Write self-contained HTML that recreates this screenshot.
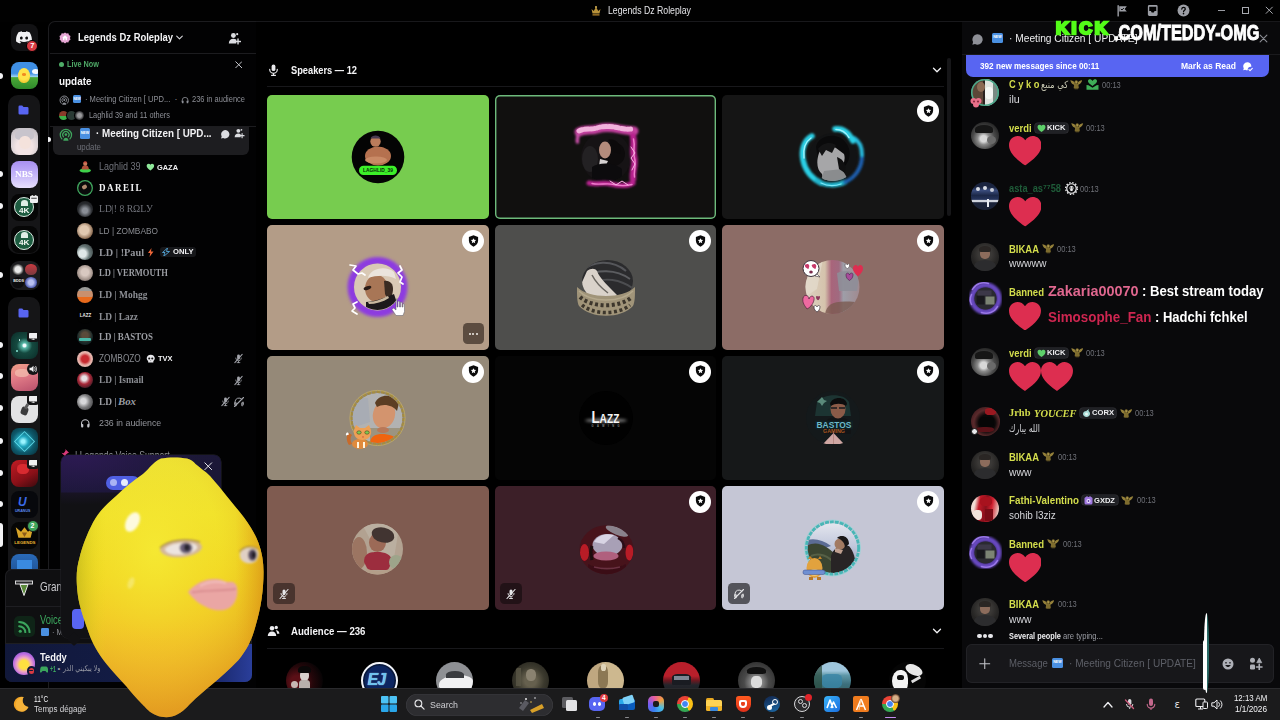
<!DOCTYPE html>
<html lang="en">
<head>
<meta charset="utf-8">
<title>Legends Dz Roleplay</title>
<style>
*{box-sizing:border-box;margin:0;padding:0}
html,body{width:1280px;height:720px;overflow:hidden;background:#000}
body{font-family:"Liberation Sans","DejaVu Sans",sans-serif;color:#fff;position:relative;font-size:11px}
.a{position:absolute}
.t{position:absolute;white-space:nowrap;line-height:1}
.b{font-weight:bold}
.c{border-radius:50%}
/* ---- title bar ---- */
#title{left:0;top:0;width:1280px;height:22px;background:#010101}
/* ---- stage ---- */
#stage{left:256px;top:22px;width:706px;height:666px;background:#000}
.tile{position:absolute;width:221.700px;height:124.200px;border-radius:5px;overflow:hidden}
.avs{position:absolute;left:75px;top:26px;overflow:visible}
.mod{position:absolute;right:5px;top:5px;width:22px;height:22px;border-radius:50%;background:#fff}
.mod svg{position:absolute;left:5.200px;top:3.800px}
.mute{position:absolute;left:5.5px;bottom:5.5px;width:22px;height:21px;border-radius:4.5px;background:rgba(0,0,0,.42)}
.mute svg{position:absolute;left:5px;top:4.5px}
/* ---- chat ---- */
#chat{left:962px;top:22px;width:318px;height:666px;background:#09090b}
.nm{color:#d5dd47;font-weight:bold;font-size:11px}
.ts{color:#7d7f86;font-size:8.5px}
.msg{color:#d6d7da;font-size:11px}
.cav{position:absolute;left:972px;width:27px;height:27px;border-radius:50%;overflow:hidden}
.tag{position:absolute;height:11px;border-radius:3px;background:#26272b;color:#e4e4e6;font-size:7.5px;font-weight:bold;line-height:11px;padding-left:10px;padding-right:3px;white-space:nowrap}
/* ---- taskbar ---- */
#task{left:0;top:688px;width:1280px;height:32px;background:#1b1b1c}
</style>
</head>
<body>


<svg width="0" height="0" style="position:absolute">
<defs>
<symbol id="shield" viewBox="0 0 24 24"><path d="M12 1.5l8.5 3.2v6.6c0 5-3.4 9.300-8.5 11.200C6.900 20.600 3.500 16.300 3.500 11.300V4.700z" fill="#0b0b0c"/><path d="M12 6.800l1.500 3.100 3.400.4-2.500 2.300.7 3.400-3.100-1.700-3.100 1.700.7-3.400-2.500-2.300 3.400-.4z" fill="#fff"/></symbol>
<symbol id="micoff" viewBox="0 0 24 24"><path d="M12 3a3 3 0 0 0-3 3v5a3 3 0 0 0 4.800 2.400L15 12V6a3 3 0 0 0-3-3z" fill="#e6e6e8"/><path d="M6 11a6 6 0 0 0 9.500 4.900M18 11a6 6 0 0 1-.6 2.600M12 17.500V21M9 21h6" stroke="#e6e6e8" stroke-width="1.800" fill="none" stroke-linecap="round"/><path d="M20 3L4 21" stroke="#e6e6e8" stroke-width="2.200" stroke-linecap="round"/></symbol>
<symbol id="deaf" viewBox="0 0 24 24"><path d="M4 17v-5a8 8 0 0 1 14-5.300M20 12v5M4 13.500h2.500v6H5a1 1 0 0 1-1-1zM20 13.500h-2.500v6H19a1 1 0 0 0 1-1z" stroke="#e6e6e8" stroke-width="1.900" fill="none" stroke-linecap="round" stroke-linejoin="round"/><path d="M21 3L3 21" stroke="#e6e6e8" stroke-width="2.200" stroke-linecap="round"/></symbol>
<symbol id="heart" viewBox="1.200 3 33.600 30.500" preserveAspectRatio="none"><path d="M18 33.500C6.500 25.500 1.200 19.300 1.200 12.300 1.200 6.900 5.300 3 10.200 3c3.200 0 6.100 1.700 7.800 4.500C19.700 4.700 22.600 3 25.800 3c4.900 0 9 3.900 9 9.300 0 7-5.300 13.200-16.800 21.200z" fill="#dd2e50"/></symbol>
<symbol id="chev" viewBox="0 0 24 24"><path d="M5 8.500l7 7 7-7" stroke="#f2f2f4" stroke-width="2.600" fill="none" stroke-linecap="round" stroke-linejoin="round"/></symbol>
<symbol id="wing" viewBox="0 0 24 20"><path d="M12 2.500c2 0 3.200 1.500 3.200 3.300 0 1.300-.6 2.400-1.500 3l2.300 1.200 1 7.500h-10l1-7.500 2.300-1.200c-.9-.6-1.500-1.700-1.500-3C8.800 4 10 2.500 12 2.500z" fill="#7e6c2e"/><path d="M.5 2.500c3.500 0 7 1.800 9 5-.8 1-.8 2.500 0 3.800C5.500 11.500 2 8.500.5 2.500zM23.500 2.500c-3.500 0-7 1.800-9 5 .8 1 .8 2.500 0 3.800 4-.3 7.500-3.300 9-8.800z" fill="#94803a"/><path d="M8 17.500h8l-1 2.500H9z" fill="#6e5e28"/><circle cx="12" cy="5.800" r="1.600" fill="#b8a458"/></symbol>
</defs>
</svg>

<!-- ================= TITLE BAR ================= -->
<div id="title" class="a"></div>
<svg class="a" style="left:590px;top:4.500px" width="12" height="12" viewBox="0 0 24 24"><path d="M3 8l4.500 4L12 4l4.500 8L21 8l-2 9H5z" fill="#b8923a"/><rect x="5" y="18.500" width="14" height="2.500" fill="#b8862c"/><circle cx="12" cy="4" r="1.800" fill="#f0c860"/></svg>
<div class="t" style="left:608.00px;top:5.10px;font-size:10.60px;color:#e4e4e7;transform:scaleX(0.824);transform-origin:0 50%;">Legends Dz Roleplay</div>
<svg class="a" style="left:1116px;top:4px" width="13" height="13" viewBox="0 0 24 24"><path d="M4 3v19" stroke="#9c9ea5" stroke-width="2.600" stroke-linecap="round"/><path d="M6 4h14l-4 5 4 5H6z" fill="#9c9ea5"/><path d="M9 9l2 2 3.500-3.500" stroke="#010101" stroke-width="1.800" fill="none"/></svg>
<svg class="a" style="left:1145.500px;top:4px" width="13.500" height="13" viewBox="0 0 24 24"><path d="M3 4.500A2.500 2.500 0 0 1 5.500 2h13A2.500 2.500 0 0 1 21 4.500v15a2.500 2.500 0 0 1-2.500 2.500h-13A2.500 2.500 0 0 1 3 19.500zM5.500 5v8h3.200l1.300 2.500h4l1.300-2.500h3.200V5z" fill="#9c9ea5" fill-rule="evenodd"/></svg>
<svg class="a" style="left:1177px;top:4px" width="13" height="13" viewBox="0 0 24 24"><circle cx="12" cy="12" r="11" fill="#9c9ea5"/><path d="M8.800 9.300c.2-2 1.600-3 3.300-3 1.800 0 3.200 1.100 3.200 2.800 0 2.400-3.200 2.600-3.200 5" stroke="#010101" stroke-width="2.300" fill="none" stroke-linecap="round"/><circle cx="12" cy="17.800" r="1.500" fill="#010101"/></svg>
<div class="a" style="left:1217.50px;top:10.30px;width:7.00px;height:1.00px;background:#9a9ca2;"></div>
<div class="a" style="left:1241.50px;top:6.50px;width:7.50px;height:7.50px;background:transparent;border:1px solid #a8aab0;"></div>
<svg class="a" style="left:1265px;top:6px" width="8.500" height="8.500" viewBox="0 0 10 10"><path d="M1 1l8 8M9 1l-8 8" stroke="#b0b2b8" stroke-width="1.100"/></svg>

<!-- ================= SERVER RAIL ================= -->
<div id="rail" class="a" style="left:0;top:22px;width:49px;height:666px;background:#000"></div>
<div class="a" style="left:10.5px;top:24.0px;width:27.0px;height:27.0px;border-radius:8.0px;background:#121214;overflow:hidden;"><svg class="a" style="left:5.500px;top:7px" width="16" height="12.500" viewBox="0 0 24 18"><path d="M20.300 1.500A19 19 0 0 0 15.400 0l-.6 1.300a17.500 17.500 0 0 0-5.600 0L8.600 0a19 19 0 0 0-4.900 1.500C.6 6.200-.3 10.800.2 15.300a19.500 19.500 0 0 0 6 3l1.300-2.100-2-1 .5-.4a13.800 13.800 0 0 0 12 0l.5.400-2 1 1.300 2.100a19.500 19.500 0 0 0 6-3c.5-5.200-.9-9.800-3.500-13.800zM8 12.500c-1.200 0-2.100-1.100-2.100-2.400S6.800 7.700 8 7.700s2.200 1.100 2.100 2.400c0 1.300-.9 2.400-2.100 2.400zm8 0c-1.200 0-2.100-1.100-2.100-2.400s.9-2.400 2.100-2.400 2.200 1.100 2.100 2.400c0 1.300-.9 2.400-2.100 2.400z" fill="#f2f2f4"/></svg></div>
<div class="a c" style="left:26.200px;top:39.600px;width:12px;height:12px;background:#d83a42;border:1.500px solid #000"></div>
<div class="t" style="left:30.30px;top:41.95px;font-size:7.50px;color:#fff;font-weight:bold;">7</div>
<div class="a" style="left:10.5px;top:62.3px;width:27.0px;height:27.0px;border-radius:8.0px;background:linear-gradient(180deg,#3f8fe4 0 42%,#9ad0f0 54%,#4aa838 58%,#2f8a2a 100%);overflow:hidden;"><i class="a" style="left:7.500px;top:5.500px;width:12px;height:15px;border-radius:50% 50% 45% 45%;background:radial-gradient(circle at 50% 40%,#ffe34a 0 50%,#e8b820 100%)"></i><i class="a" style="left:11.500px;top:11px;width:4px;height:2.500px;border-radius:50%;background:#f08a20"></i><i class="a c" style="left:21px;top:7px;width:7px;height:5px;background:#f4f8fc"></i></div>
<div class="a" style="left:0.00px;top:72.50px;width:2.60px;height:6.00px;background:#f2f2f4;border-radius:0 3px 3px 0;"></div>
<div class="a" style="left:8.30px;top:94.50px;width:31.50px;height:159.50px;background:#151517;border-radius:10.0px;"></div>
<svg class="a" style="left:18.300px;top:104.7px" width="11" height="10" viewBox="0 0 22 20"><path d="M1 3.500A2.500 2.500 0 0 1 3.500 1h5l2.500 3h7.500A2.500 2.500 0 0 1 21 6.500v10a2.500 2.500 0 0 1-2.500 2.500h-15A2.500 2.500 0 0 1 1 16.500z" fill="#5865f2"/></svg>
<div class="a" style="left:10.5px;top:128.2px;width:27.0px;height:27.0px;border-radius:8.0px;background:radial-gradient(circle at 50% 70%,#f2e4e4 0 35%,#d8d0d4 60%,#b8b4bc 100%);overflow:hidden;"><i class="a" style="left:4px;top:1px;width:19px;height:11px;border-radius:50% 50% 30% 30%;background:#c8c4cc"></i><i class="a" style="left:8px;top:8px;width:12px;height:13px;border-radius:45%;background:#f4e2dc"></i></div>
<div class="a" style="left:10.5px;top:160.6px;width:27.0px;height:27.0px;border-radius:8.0px;background:linear-gradient(180deg,#a890f0 0,#c0b0f8 45%,#e8e0fc 100%);overflow:hidden;"><div class="t" style="left:4.20px;top:9.25px;font-size:8.50px;color:#fff;font-weight:bold;font-family:'Liberation Serif','DejaVu Serif',serif;transform:scaleX(1.089);transform-origin:0 50%;">NBS</div></div>
<div class="a" style="left:0.00px;top:170.70px;width:2.60px;height:6.00px;background:#f2f2f4;border-radius:0 3px 3px 0;"></div>
<div class="a" style="left:10.5px;top:193.7px;width:27.0px;height:27.0px;border-radius:8.0px;background:#060606;overflow:hidden;"><i class="a c" style="left:3.500px;top:3.500px;width:20px;height:20px;background:#1d5c40;border:1px solid #d8e8e0"></i><div class="t" style="left:8.30px;top:13.20px;font-size:7.00px;color:#f4f8f4;font-weight:bold;transform:scaleX(1.173);transform-origin:0 50%;">4K</div><i class="a" style="left:10px;top:6px;width:7px;height:6px;border-radius:50% 50% 0 0;background:#dfeee6"></i></div>
<svg class="a" style="left:30px;top:194.500px" width="8" height="8" viewBox="0 0 16 16"><rect x="0" y="1.500" width="16" height="14.500" rx="2.500" fill="#f0f0f2"/><path d="M2.500 6.500h11" stroke="#151517" stroke-width="1.600"/><path d="M4.500 0v3.500M11.500 0v3.500" stroke="#f0f0f2" stroke-width="2"/></svg>
<div class="a" style="left:0.00px;top:202.80px;width:2.60px;height:6.00px;background:#f2f2f4;border-radius:0 3px 3px 0;"></div>
<div class="a" style="left:10.5px;top:226.2px;width:27.0px;height:27.0px;border-radius:8.0px;background:#060606;overflow:hidden;"><i class="a c" style="left:3.500px;top:3.500px;width:20px;height:20px;background:#1d5c40;border:1px solid #d8e8e0"></i><div class="t" style="left:8.30px;top:13.20px;font-size:7.00px;color:#f4f8f4;font-weight:bold;transform:scaleX(1.173);transform-origin:0 50%;">4K</div><i class="a" style="left:10px;top:6px;width:7px;height:6px;border-radius:50% 50% 0 0;background:#dfeee6"></i></div>
<div class="a" style="left:9.50px;top:261.00px;width:30.00px;height:29.00px;background:#1b1b1e;border-radius:9.0px;"></div>
<div class="a c" style="left:12px;top:263.500px;width:11.500px;height:11.500px;background:radial-gradient(circle,#e8e8e8 0 35%,#2a2a2a 70%)"></div>
<div class="a c" style="left:25px;top:263.500px;width:11.500px;height:11.500px;background:linear-gradient(180deg,#c83a40,#7a3a40)"></div>
<div class="a c" style="left:12px;top:276.500px;width:11.500px;height:11.500px;background:#0c0c0e"></div><div class="t" style="left:13.30px;top:280.40px;font-size:3.80px;color:#e8e8e8;font-weight:bold;">BDDS</div>
<div class="a c" style="left:25px;top:276.500px;width:11.500px;height:11.500px;background:radial-gradient(circle,#b8c0f0 0 30%,#4a58b0 70%)"></div>
<div class="a" style="left:0.00px;top:272.00px;width:2.60px;height:6.00px;background:#f2f2f4;border-radius:0 3px 3px 0;"></div>
<div class="a" style="left:8.30px;top:297.00px;width:31.50px;height:290.00px;background:#151517;border-radius:10.0px;"></div>
<svg class="a" style="left:18.300px;top:307.5px" width="11" height="10" viewBox="0 0 22 20"><path d="M1 3.500A2.500 2.500 0 0 1 3.500 1h5l2.500 3h7.500A2.500 2.500 0 0 1 21 6.500v10a2.500 2.500 0 0 1-2.500 2.500h-15A2.500 2.500 0 0 1 1 16.500z" fill="#5865f2"/></svg>
<div class="a" style="left:10.5px;top:332.3px;width:27.0px;height:27.0px;border-radius:8.0px;background:radial-gradient(circle at 50% 50%,#f4fcff 0 7%,#58b8a8 14%,#154a40 40%,#0a2a26 100%);overflow:hidden;"><i class="a c" style="left:5px;top:18px;width:2px;height:2px;background:#8ae8d8"></i><i class="a c" style="left:20px;top:8px;width:2px;height:2px;background:#e86a5a"></i><i class="a c" style="left:8px;top:7px;width:1.500px;height:1.500px;background:#d8f8f0"></i></div>
<div class="a" style="left:26.50px;top:331.00px;width:12.00px;height:10.50px;background:#141416;border-radius:3.0px;"></div><svg class="a" style="left:28.500px;top:332.5px" width="8.500" height="7.500" viewBox="0 0 17 15"><rect x="0" y="0" width="17" height="11" rx="1.500" fill="#f0f0f2"/><path d="M5 14h7M8.500 11v3" stroke="#f0f0f2" stroke-width="1.800"/></svg>
<div class="a" style="left:0.00px;top:341.50px;width:2.60px;height:6.00px;background:#f2f2f4;border-radius:0 3px 3px 0;"></div>
<div class="a" style="left:10.5px;top:363.8px;width:27.0px;height:27.0px;border-radius:8.0px;background:linear-gradient(160deg,#f0a088 0,#e07a86 45%,#b8506c 100%);overflow:hidden;"><i class="a" style="left:4px;top:5px;width:14px;height:8px;border-radius:40%;background:#f4c0b0;opacity:.7"></i></div>
<div class="a" style="left:26.50px;top:362.50px;width:12.00px;height:12.00px;background:#141416;border-radius:6.0px;"></div><svg class="a" style="left:28.500px;top:364.500px" width="8.500" height="8" viewBox="0 0 17 16"><path d="M1 5.500h3.500L9 1.500v13L4.500 10.500H1z" fill="#f0f0f2"/><path d="M11.500 5a4.500 4.500 0 0 1 0 6M13.500 2.500a8 8 0 0 1 0 11" stroke="#f0f0f2" stroke-width="1.600" fill="none" stroke-linecap="round"/></svg>
<div class="a" style="left:0.00px;top:373.00px;width:2.60px;height:6.00px;background:#f2f2f4;border-radius:0 3px 3px 0;"></div>
<div class="a" style="left:10.5px;top:395.6px;width:27.0px;height:27.0px;border-radius:8.0px;background:#e2e2e4;overflow:hidden;"><i class="a" style="left:10px;top:11px;width:7px;height:8px;border-radius:30%;background:#3a3a3c;transform:rotate(20deg)"></i><i class="a" style="left:14px;top:8px;width:3px;height:5px;background:#5a5a5c;transform:rotate(30deg)"></i></div>
<div class="a" style="left:26.50px;top:394.00px;width:12.00px;height:10.50px;background:#141416;border-radius:3.0px;"></div><svg class="a" style="left:28.500px;top:395.5px" width="8.500" height="7.500" viewBox="0 0 17 15"><rect x="0" y="0" width="17" height="11" rx="1.500" fill="#f0f0f2"/><path d="M5 14h7M8.500 11v3" stroke="#f0f0f2" stroke-width="1.800"/></svg>
<div class="a" style="left:0.00px;top:405.00px;width:2.60px;height:6.00px;background:#f2f2f4;border-radius:0 3px 3px 0;"></div>
<div class="a" style="left:10.5px;top:427.5px;width:27.0px;height:27.0px;border-radius:8.0px;background:radial-gradient(circle at 45% 50%,#9af4ff 0 8%,#22a8c0 25%,#0e5a6c 55%,#072a34 100%);overflow:hidden;"><i class="a" style="left:6px;top:6px;width:15px;height:15px;border:1.200px solid #6ae8f8;transform:rotate(45deg);opacity:.8"></i></div>
<div class="a" style="left:0.00px;top:437.50px;width:2.60px;height:6.00px;background:#f2f2f4;border-radius:0 3px 3px 0;"></div>
<div class="a" style="left:10.5px;top:459.5px;width:27.0px;height:27.0px;border-radius:8.0px;background:linear-gradient(150deg,#c01c24 0,#8a1018 60%,#3a0a0e 100%);overflow:hidden;"><i class="a" style="left:6px;top:4px;width:12px;height:10px;border-radius:40%;background:#d82a30"></i></div>
<div class="a" style="left:26.50px;top:458.00px;width:12.00px;height:10.50px;background:#141416;border-radius:3.0px;"></div><svg class="a" style="left:28.500px;top:459.5px" width="8.500" height="7.500" viewBox="0 0 17 15"><rect x="0" y="0" width="17" height="11" rx="1.500" fill="#f0f0f2"/><path d="M5 14h7M8.500 11v3" stroke="#f0f0f2" stroke-width="1.800"/></svg>
<div class="a" style="left:0.00px;top:470.00px;width:2.60px;height:6.00px;background:#f2f2f4;border-radius:0 3px 3px 0;"></div>
<div class="a" style="left:10.5px;top:491.0px;width:27.0px;height:27.0px;border-radius:8.0px;background:#07080c;overflow:hidden;"><div class="t" style="left:7.50px;top:5.00px;font-size:12.00px;color:#3a6ae8;font-weight:bold;font-style:italic;">U</div><div class="t" style="left:4.50px;top:19.20px;font-size:3.60px;color:#5a8af0;font-weight:bold;">URANUS</div></div>
<div class="a" style="left:0.00px;top:501.00px;width:2.60px;height:6.00px;background:#f2f2f4;border-radius:0 3px 3px 0;"></div>
<div class="a" style="left:10.5px;top:521.5px;width:27.0px;height:27.0px;border-radius:8.0px;background:#060606;overflow:hidden;"><svg class="a" style="left:3px;top:4px" width="21" height="13" viewBox="0 0 24 14"><path d="M2 1l6 5 4-5 4 5 6-5-3 12H5z" fill="#d8a428"/><path d="M9 7l3 5 3-5z" fill="#8a5a1a"/></svg><div class="t" style="left:3.80px;top:19.80px;font-size:4.40px;color:#e8b430;font-weight:bold;">LEGENDS</div></div>
<div class="a c" style="left:26.500px;top:519.500px;width:12px;height:12px;background:#3fa55d;border:1.500px solid #151517"></div><div class="t" style="left:30.60px;top:522.20px;font-size:7.00px;color:#fff;font-weight:bold;">2</div>
<div class="a" style="left:0.00px;top:523.00px;width:2.80px;height:24.00px;background:#f2f2f4;border-radius:0 3px 3px 0;"></div>
<div class="a" style="left:10.5px;top:553.5px;width:27.0px;height:27.0px;border-radius:8.0px;background:linear-gradient(180deg,#2a6ab8,#1a4a8a);overflow:hidden;"><i class="a" style="left:6px;top:6px;width:15px;height:10px;background:#3a8ae0"></i></div>

<!-- ================= SIDEBAR ================= -->
<div id="side" class="a" style="left:48px;top:21px;width:208.500px;height:667px;background:#020203;border-top:1px solid #1c1c1f;border-left:1px solid #1c1c1f;border-right:1px solid #17171a;border-top-left-radius:7px"></div>
<svg class="a" style="left:59.300px;top:31.800px" width="12" height="12" viewBox="0 0 24 24"><path d="M12 .8l3 2.200 3.700-.3 1.200 3.500 3.100 2-1 3.600 1 3.600-3.100 2-1.200 3.500-3.700-.3-3 2.200-3-2.200-3.700.3-1.200-3.500-3.100-2 1-3.600-1-3.600 3.100-2L5.300 2.700 9 3z" fill="#e6a6d4"/><path d="M12 6.500l5.500 4.800h-1.500v5h-2.800v-3.300h-2.400v3.300H8v-5H6.500z" fill="#fff"/></svg>
<div class="t" style="left:77.50px;top:32.30px;font-size:10.80px;color:#f4f4f6;font-weight:bold;transform:scaleX(0.875);transform-origin:0 50%;">Legends Dz Roleplay</div>
<svg class="a" style="left:176px;top:35px" width="7" height="5.500" viewBox="0 0 10 7"><path d="M1 1.200l4 4 4-4" stroke="#d8d8dc" stroke-width="1.500" fill="none" stroke-linecap="round" stroke-linejoin="round"/></svg>
<svg class="a" style="left:228.00px;top:32.00px" width="13.0" height="13.0" viewBox="0 0 24 24"><circle cx="10" cy="6.500" r="4.500" fill="#dcdde1"/><path d="M1.500 21c0-5.500 3.500-8.500 8.500-8.500 2 0 3.800.5 5.200 1.500v7z" fill="#dcdde1"/><path d="M18.500 13v9M14 17.500h9" stroke="#dcdde1" stroke-width="2.600" stroke-linecap="round"/><circle cx="17" cy="4" r="2" fill="#dcdde1"/></svg>
<div class="a" style="left:49.50px;top:53.30px;width:206.00px;height:1.00px;background:#1c1c1f;"></div>
<div class="a c" style="left:58.600px;top:62.100px;width:5px;height:5px;background:#4fae68"></div>
<div class="t" style="left:66.90px;top:60.20px;font-size:8.80px;color:#4ea866;font-weight:bold;transform:scaleX(0.828);transform-origin:0 50%;">Live Now</div>
<svg class="a" style="left:234.500px;top:61px" width="7.500" height="7.500" viewBox="0 0 10 10"><path d="M1 1l8 8M9 1l-8 8" stroke="#c9cad0" stroke-width="1.300" stroke-linecap="round"/></svg>
<div class="t" style="left:58.70px;top:75.86px;font-size:10.80px;color:#f6f6f8;font-weight:bold;transform:scaleX(0.918);transform-origin:0 50%;">update</div>
<svg class="a" style="left:58.50px;top:94.50px" width="10.5" height="10.5" viewBox="0 0 24 24"><path d="M5 19A9.800 9.800 0 1 1 19 19" fill="none" stroke="#8d8f96" stroke-width="2.200" stroke-linecap="round"/><path d="M8 15.500A5.500 5.500 0 1 1 16 15.500" fill="none" stroke="#8d8f96" stroke-width="2" stroke-linecap="round"/><circle cx="12" cy="11.500" r="2.300" fill="#8d8f96"/><path d="M7.500 22c0-3 2-5 4.500-5s4.500 2 4.500 5z" fill="#8d8f96"/></svg>
<div class="a" style="left:72.60px;top:95.40px;width:8.40px;height:8.00px;background:#4a90e2;border-radius:1.5px;"><div class="t" style="left:0.00px;top:-1.56px;font-size:3.00px;color:#fff;font-weight:bold;left:0.9px;top:2.6px;">NEW</div></div>
<div class="t" style="left:85.40px;top:95.20px;font-size:8.80px;color:#8d8f96;transform:scaleX(0.859);transform-origin:0 50%;">· Meeting Citizen [ UPD...</div>
<div class="t" style="left:174.50px;top:95.20px;font-size:8.80px;color:#8d8f96;">·</div>
<svg class="a" style="left:180.50px;top:95.50px" width="8.2" height="8.2" viewBox="0 0 24 24"><path d="M3.500 17v-4.500a8.500 8.500 0 0 1 17 0V17" fill="none" stroke="#8d8f96" stroke-width="2.400"/><rect x="2.500" y="13.500" width="5" height="8" rx="2" fill="#8d8f96"/><rect x="16.500" y="13.500" width="5" height="8" rx="2" fill="#8d8f96"/></svg>
<div class="t" style="left:191.60px;top:95.20px;font-size:8.80px;color:#8d8f96;transform:scaleX(0.853);transform-origin:0 50%;">236 in audience</div>
<div class="a c" style="left:58.500px;top:110.500px;width:9.500px;height:9.500px;background:linear-gradient(180deg,#8a3a2a 0 55%,#3fb04a 55%)"></div>
<div class="a c" style="left:66.500px;top:110.500px;width:9.500px;height:9.500px;background:#2a3a34;box-shadow:0 0 0 1px #020203"></div>
<div class="a c" style="left:74.500px;top:110.500px;width:9.500px;height:9.500px;background:radial-gradient(circle,#9a9a9c 0 30%,#2a2a2c 70%);box-shadow:0 0 0 1px #020203"></div>
<div class="t" style="left:89.30px;top:110.90px;font-size:8.80px;color:#8d8f96;transform:scaleX(0.842);transform-origin:0 50%;">Laghlid 39 and 11 others</div>
<div class="a" style="left:49.50px;top:125.60px;width:206.00px;height:1.00px;background:#1c1c1f;"></div>
<div class="a" style="left:53.00px;top:126.60px;width:196.00px;height:28.30px;background:#1d1d20;border-radius:0 0 6px 6px;"></div>
<div class="a" style="left:48.00px;top:136.70px;width:2.50px;height:5.00px;background:#f0f0f2;border-radius:0 3px 3px 0;"></div>
<svg class="a" style="left:58.80px;top:127.60px" width="13.8" height="13.8" viewBox="0 0 24 24"><path d="M5 19A9.800 9.800 0 1 1 19 19" fill="none" stroke="#3fa55d" stroke-width="2.200" stroke-linecap="round"/><path d="M8 15.500A5.500 5.500 0 1 1 16 15.500" fill="none" stroke="#3fa55d" stroke-width="2" stroke-linecap="round"/><circle cx="12" cy="11.500" r="2.300" fill="#3fa55d"/><path d="M7.500 22c0-3 2-5 4.500-5s4.500 2 4.500 5z" fill="#3fa55d"/></svg>
<div class="a" style="left:79.50px;top:128.30px;width:10.80px;height:10.60px;background:#4a90e2;border-radius:1.5px;"><div class="t" style="left:0.00px;top:-1.87px;font-size:3.60px;color:#fff;font-weight:bold;left:1.2px;top:3.4px;">NEW</div></div>
<div class="t" style="left:95.60px;top:128.40px;font-size:10.80px;color:#f2f2f4;font-weight:bold;transform:scaleX(0.909);transform-origin:0 50%;">· Meeting Citizen [ UPD...</div>
<svg class="a" style="left:220px;top:128.500px" width="10.500" height="10.500" viewBox="0 0 24 24"><path d="M12 2.500a9.500 9.500 0 1 1-4.600 17.800L2.500 21.500l1.300-4.800A9.500 9.500 0 0 1 12 2.500z" fill="#dcdde1"/></svg>
<svg class="a" style="left:234.00px;top:128.20px" width="10.5" height="10.5" viewBox="0 0 24 24"><circle cx="10" cy="6.500" r="4.500" fill="#dcdde1"/><path d="M1.500 21c0-5.500 3.500-8.500 8.500-8.500 2 0 3.800.5 5.200 1.500v7z" fill="#dcdde1"/><path d="M18.500 13v9M14 17.500h9" stroke="#dcdde1" stroke-width="2.600" stroke-linecap="round"/><circle cx="17" cy="4" r="2" fill="#dcdde1"/></svg>
<div class="t" style="left:77.20px;top:143.07px;font-size:8.60px;color:#6c6e76;transform:scaleX(0.912);transform-origin:0 50%;">update</div>
<svg class="a" style="left:79px;top:160px" width="12.500" height="12.500" viewBox="0 0 24 24"><ellipse cx="12" cy="20" rx="11" ry="4" fill="#3fd04a"/><path d="M5 18c0-5 3-8 7-8s7 3 7 8z" fill="#b0503a"/><circle cx="12" cy="7" r="4" fill="#c87a5a"/><path d="M8 5c1-3 7-3 8 0z" fill="#c83030"/></svg>
<div class="t" style="left:98.60px;top:162.20px;font-size:10.00px;color:#71737b;transform:scaleX(0.899);transform-origin:0 50%;">Laghlid 39</div>
<svg class="a" style="left:146px;top:163.2px" width="8.800" height="8" viewBox="0 0 36 36"><path d="M18 33.500C6.500 25.500 1.200 19.300 1.200 12.300 1.200 6.900 5.300 3 10.200 3c3.200 0 6.100 1.700 7.800 4.500C19.700 4.700 22.600 3 25.800 3c4.900 0 9 3.900 9 9.300 0 7-5.300 13.200-16.800 21.200z" fill="#8fe89a"/></svg>
<div class="t" style="left:156.60px;top:163.50px;font-size:7.80px;color:#f0f0f2;font-weight:bold;transform:scaleX(0.950);transform-origin:0 50%;">GAZA</div>
<div class="a c" style="left:77.30px;top:180.00px;width:16.0px;height:16.0px;background:#0a0a0b;overflow:hidden;box-shadow:inset 0 0 0 1.300px #3fa55d;"><i class="a" style="left:5px;top:5px;width:5px;height:4px;border-radius:40%;background:#b08a70;transform:rotate(-30deg)"></i></div>
<div class="t" style="left:98.90px;top:183.10px;font-size:9.80px;color:#f4f4f6;font-weight:bold;font-family:'Liberation Serif','DejaVu Serif',serif;letter-spacing:1.60px;transform:scaleX(0.922);transform-origin:0 50%;">DAREIL</div>
<div class="a c" style="left:77.30px;top:201.30px;width:16.0px;height:16.0px;background:radial-gradient(circle at 50% 60%,#8a8e96 0 20%,#2a2c30 55%,#121214 100%);overflow:hidden;"></div>
<div class="t" style="left:98.90px;top:204.10px;font-size:10.40px;color:#71737b;font-family:'Liberation Serif','DejaVu Serif',serif;transform:scaleX(0.928);transform-origin:0 50%;">LD|! 8 RΩLУ</div>
<div class="a c" style="left:77.30px;top:222.60px;width:16.0px;height:16.0px;background:radial-gradient(circle at 45% 45%,#e0c8b0 0 35%,#8a6a50 70%,#2a2220 100%);overflow:hidden;"></div>
<div class="t" style="left:98.90px;top:225.80px;font-size:9.60px;color:#8a8c92;transform:scaleX(0.866);transform-origin:0 50%;">LD | ZOMBABO</div>
<div class="a c" style="left:77.30px;top:244.00px;width:16.0px;height:16.0px;background:radial-gradient(circle at 35% 60%,#e0e8e8 0 25%,#6a7a7a 50%,#2a3030 100%);overflow:hidden;"></div>
<div class="t" style="left:98.90px;top:246.60px;font-size:10.80px;color:#94969c;font-weight:bold;font-family:'Liberation Serif','DejaVu Serif',serif;transform:scaleX(0.950);transform-origin:0 50%;">LD | !Paul</div>
<svg class="a" style="left:148px;top:247.5px" width="5.500" height="9" viewBox="0 0 11 18"><path d="M7 0L0 10h4.500L3 18l8-11H6z" fill="#f0683a"/></svg>
<div class="a" style="left:159.60px;top:246.70px;width:36.00px;height:10.40px;background:#16171a;border-radius:3.0px;"></div>
<svg class="a" style="left:162px;top:247.7px" width="8" height="8.500" viewBox="0 0 16 17"><path d="M11 0L1 9h5l-3 8L15 7H9z" fill="none" stroke="#5ab8f0" stroke-width="1.600" stroke-linejoin="round"/></svg>
<div class="t" style="left:172.60px;top:248.20px;font-size:7.80px;color:#f2f2f4;font-weight:bold;transform:scaleX(0.978);transform-origin:0 50%;">ONLY</div>
<div class="a c" style="left:77.30px;top:265.30px;width:16.0px;height:16.0px;background:radial-gradient(circle at 50% 45%,#d8c8c0 0 30%,#a89890 60%,#5a5250 100%);overflow:hidden;"></div>
<div class="t" style="left:98.90px;top:268.20px;font-size:10.20px;color:#9c9ea4;font-weight:bold;font-family:'Liberation Serif','DejaVu Serif',serif;transform:scaleX(0.836);transform-origin:0 50%;">LD | VERMOUTH</div>
<div class="a c" style="left:77.30px;top:286.60px;width:16.0px;height:16.0px;background:linear-gradient(180deg,#9a9a98 0 25%,#c8906e 25% 62%,#e86a1c 62%);overflow:hidden;"></div>
<div class="t" style="left:98.90px;top:289.20px;font-size:10.80px;color:#8c8e94;font-weight:bold;font-family:'Liberation Serif','DejaVu Serif',serif;transform:scaleX(0.877);transform-origin:0 50%;">LD | Mohgg</div>
<div class="a c" style="left:77.30px;top:308.00px;width:16.0px;height:16.0px;background:#020202;overflow:hidden;"><b class="t" style="left:2.500px;top:5.500px;font-size:4.500px;color:#e8e8e8">LAZZ</b></div>
<div class="t" style="left:98.90px;top:310.60px;font-size:10.80px;color:#8c8e94;font-weight:bold;font-family:'Liberation Serif','DejaVu Serif',serif;transform:scaleX(0.867);transform-origin:0 50%;">LD | Lazz</div>
<div class="a c" style="left:77.30px;top:329.40px;width:16.0px;height:16.0px;background:radial-gradient(circle at 50% 40%,#5a4a3a 0 25%,#1a2a2a 60%,#0e1214 100%);overflow:hidden;"><i class="a" style="left:2px;top:8.500px;width:12px;height:3.500px;background:#4ab8a8;border-radius:1px"></i></div>
<div class="t" style="left:98.90px;top:332.20px;font-size:10.40px;color:#9c9ea4;font-weight:bold;font-family:'Liberation Serif','DejaVu Serif',serif;transform:scaleX(0.860);transform-origin:0 50%;">LD | BASTOS</div>
<div class="a c" style="left:77.30px;top:350.80px;width:16.0px;height:16.0px;background:radial-gradient(circle at 50% 50%,#c82a30 0 30%,#e8b0a8 55%,#d8c0b8 100%);overflow:hidden;"></div>
<div class="t" style="left:98.90px;top:353.80px;font-size:10.00px;color:#8a8c92;transform:scaleX(0.827);transform-origin:0 50%;">ZOMBOZO</div>
<svg class="a" style="left:146.300px;top:354.0px" width="9.500" height="9.500" viewBox="0 0 20 20"><path d="M10 1.500c5 0 8.500 3.300 8.500 7.600 0 2.600-1.300 4.400-3 5.500v3.400h-11v-3.400c-1.700-1.100-3-2.900-3-5.500C1.500 4.800 5 1.500 10 1.500z" fill="#e8e8ec"/><circle cx="6.800" cy="9.500" r="2.200" fill="#111"/><circle cx="13.200" cy="9.500" r="2.200" fill="#111"/><path d="M9 13.500h2l-1 2z" fill="#111"/></svg>
<div class="t" style="left:157.60px;top:355.00px;font-size:7.80px;color:#f2f2f4;font-weight:bold;transform:scaleX(0.956);transform-origin:0 50%;">TVX</div>
<svg class="a" style="left:233.00px;top:353.30px" width="11" height="11" viewBox="0 0 24 24"><path d="M12 3a3 3 0 0 0-3 3v5a3 3 0 0 0 4.800 2.400L15 12V6a3 3 0 0 0-3-3z" fill="#a4a6ad"/><path d="M6 11a6 6 0 0 0 9.500 4.900M18 11a6 6 0 0 1-.6 2.600M12 17.500V21M9 21h6" stroke="#a4a6ad" stroke-width="1.800" fill="none" stroke-linecap="round"/><path d="M20 3L4 21" stroke="#a4a6ad" stroke-width="2.200" stroke-linecap="round"/></svg>
<div class="a c" style="left:77.30px;top:372.20px;width:16.0px;height:16.0px;background:radial-gradient(circle at 45% 40%,#e8e0e4 0 18%,#a82838 45%,#3a1a24 80%);overflow:hidden;"></div>
<div class="t" style="left:98.90px;top:374.90px;font-size:10.60px;color:#8c8e94;font-weight:bold;font-family:'Liberation Serif','DejaVu Serif',serif;transform:scaleX(0.881);transform-origin:0 50%;">LD | Ismail</div>
<svg class="a" style="left:233.00px;top:374.70px" width="11" height="11" viewBox="0 0 24 24"><path d="M12 3a3 3 0 0 0-3 3v5a3 3 0 0 0 4.800 2.400L15 12V6a3 3 0 0 0-3-3z" fill="#a4a6ad"/><path d="M6 11a6 6 0 0 0 9.500 4.900M18 11a6 6 0 0 1-.6 2.600M12 17.500V21M9 21h6" stroke="#a4a6ad" stroke-width="1.800" fill="none" stroke-linecap="round"/><path d="M20 3L4 21" stroke="#a4a6ad" stroke-width="2.200" stroke-linecap="round"/></svg>
<div class="a c" style="left:77.30px;top:393.50px;width:16.0px;height:16.0px;background:radial-gradient(circle at 40% 45%,#d8d8da 0 20%,#7a7a7c 50%,#2a2a2c 100%);overflow:hidden;"></div>
<div class="t" style="left:98.90px;top:396.10px;font-size:10.80px;color:#9c9ea4;font-weight:bold;font-family:'Liberation Serif','DejaVu Serif',serif;transform:scaleX(0.871);transform-origin:0 50%;">LD |</div>
<div class="t" style="left:118.00px;top:396.10px;font-size:10.80px;color:#9c9ea4;font-weight:bold;font-style:italic;font-family:'Liberation Serif','DejaVu Serif',serif;transform:scaleX(1.000);transform-origin:0 50%;">Box</div>
<svg class="a" style="left:219.50px;top:396.00px" width="11" height="11" viewBox="0 0 24 24"><path d="M12 3a3 3 0 0 0-3 3v5a3 3 0 0 0 4.800 2.400L15 12V6a3 3 0 0 0-3-3z" fill="#a4a6ad"/><path d="M6 11a6 6 0 0 0 9.500 4.900M18 11a6 6 0 0 1-.6 2.600M12 17.500V21M9 21h6" stroke="#a4a6ad" stroke-width="1.800" fill="none" stroke-linecap="round"/><path d="M20 3L4 21" stroke="#a4a6ad" stroke-width="2.200" stroke-linecap="round"/></svg>
<svg class="a" style="left:233.00px;top:395.50px" width="12" height="12" viewBox="0 0 24 24"><path d="M4 17v-5a8 8 0 0 1 14-5.300M20 12v5M4 13.500h2.500v6H5a1 1 0 0 1-1-1zM20 13.500h-2.500v6H19a1 1 0 0 0 1-1z" stroke="#a4a6ad" stroke-width="1.900" fill="none" stroke-linecap="round" stroke-linejoin="round"/><path d="M21 3L3 21" stroke="#a4a6ad" stroke-width="2.200" stroke-linecap="round"/></svg>
<svg class="a" style="left:80.00px;top:417.60px" width="10.5" height="10.5" viewBox="0 0 24 24"><path d="M3.500 17v-4.500a8.500 8.500 0 0 1 17 0V17" fill="none" stroke="#c4c5cb" stroke-width="2.400"/><rect x="2.500" y="13.500" width="5" height="8" rx="2" fill="#c4c5cb"/><rect x="16.500" y="13.500" width="5" height="8" rx="2" fill="#c4c5cb"/></svg>
<div class="t" style="left:98.90px;top:418.00px;font-size:9.80px;color:#94969c;transform:scaleX(0.900);transform-origin:0 50%;">236 in audience</div>
<svg class="a" style="left:60px;top:449px" width="9" height="9" viewBox="0 0 12 12"><path d="M7 0l5 5-2 .5-2.500 2.500.5 3-3-3L1 12l4-4-3-3 3 .5L7.500 2z" fill="#d83a7a"/></svg>
<div class="t" style="left:75.00px;top:449.90px;font-size:10.60px;color:#94969c;transform:scaleX(0.821);transform-origin:0 50%;">| Legends Voice Support ·</div>

<!-- ================= STAGE ================= -->
<div id="stage" class="a"></div>
<div class="t" style="left:290.80px;top:64.60px;font-size:10.80px;color:#f4f4f6;font-weight:bold;transform:scaleX(0.859);transform-origin:0 50%;">Speakers — 12</div>
<svg class="a" style="left:267px;top:63px" width="13" height="14" viewBox="0 0 24 24"><rect x="8.500" y="2" width="7" height="12" rx="3.500" fill="#e9e9ec"/><path d="M5 11a7 7 0 0 0 14 0M12 18v3.500M8.500 22h7" stroke="#e9e9ec" stroke-width="2.200" fill="none" stroke-linecap="round"/></svg>
<svg class="a" style="left:931px;top:64px" width="12" height="12"><use href="#chev"/></svg>
<div class="a" style="left:267px;top:86px;width:677px;height:1px;background:#18181b"></div>
<div class="a" style="left:947px;top:58px;width:4px;height:158px;border-radius:2px;background:#161618"></div>

<div class="t" style="left:290.80px;top:625.60px;font-size:10.80px;color:#f4f4f6;font-weight:bold;transform:scaleX(0.893);transform-origin:0 50%;">Audience — 236</div>
<svg class="a" style="left:267px;top:625px" width="13" height="12" viewBox="0 0 26 24"><circle cx="10" cy="6.500" r="4.500" fill="#ececef"/><path d="M1.500 22c0-5.500 3.500-9 8.500-9s8.500 3.500 8.500 9z" fill="#ececef"/><circle cx="18.500" cy="5" r="3.300" fill="#ececef"/><path d="M17.500 10.500c4.200-.4 7.200 2.600 7.300 7h-4.500c-.3-2.800-1.200-5-2.800-7z" fill="#ececef"/></svg>
<svg class="a" style="left:931px;top:625px" width="12" height="12"><use href="#chev"/></svg>
<div class="a" style="left:267px;top:648px;width:677px;height:1px;background:#18181b"></div>
<div id="aud" class="a" style="left:0;top:0">
  <div class="a c" style="left:285.500px;top:661.500px;width:37px;height:37px;overflow:hidden;background:radial-gradient(circle at 30% 55%,#5a0f16 0 20%,#24070a 48%,#050304 80%)"><i class="a" style="left:14px;top:8px;width:9px;height:11px;border-radius:45%;background:#d8d0cc"></i><i class="a" style="left:12px;top:4px;width:13px;height:7px;border-radius:50% 50% 20% 20%;background:#0a0808"></i><i class="a" style="left:13px;top:18px;width:11px;height:12px;background:#b8b0ac;border-radius:30% 30% 0 0"></i><i class="a c" style="left:5px;top:19px;width:7px;height:7px;background:#c8b8b4"></i></div>
  <div class="a c" style="left:361px;top:661.500px;width:37px;height:37px;background:#0c2560;border:2.400px solid #f2f4f8;box-shadow:inset 0 0 0 1.500px #081738"></div>
  <div class="t b" style="left:367.500px;top:671.500px;font-size:16px;font-style:italic;color:#6cc4f0;letter-spacing:-1px;text-shadow:0 0 1px #dff4ff">EJ</div>
  <div class="a c" style="left:436px;top:661.500px;width:37px;height:37px;overflow:hidden;background:linear-gradient(180deg,#8e9094 0 100%)"><i class="a" style="left:3px;top:13px;width:34px;height:16px;border-radius:60% 40% 30% 30%;background:#f0f0f2"></i><i class="a" style="left:10px;top:9px;width:18px;height:7px;border-radius:50% 50% 0 0;background:#3a3c40"></i><i class="a" style="left:0;top:27px;width:37px;height:10px;background:#55575b"></i></div>
  <div class="a c" style="left:511.500px;top:661.500px;width:37px;height:37px;overflow:hidden;background:radial-gradient(circle at 50% 50%,#66604e 0 22%,#3c3a2e 52%,#1c1b16 100%)"><i class="a" style="left:14px;top:7px;width:10px;height:12px;border-radius:45%;background:#8a8270"></i><i class="a" style="left:4px;top:6px;width:5px;height:18px;background:#5a5646;opacity:.8"></i></div>
  <div class="a c" style="left:587px;top:661.500px;width:37px;height:37px;overflow:hidden;background:linear-gradient(90deg,#bfa780 0 40%,#cdb88f 40% 100%)"><i class="a" style="left:11px;top:4px;width:10px;height:22px;border-radius:30%;background:#8c7854"></i><i class="a" style="left:14px;top:2px;width:5px;height:7px;background:#e0d4b8;border-radius:40%"></i></div>
  <div class="a c" style="left:662.500px;top:661.500px;width:37px;height:37px;overflow:hidden;background:linear-gradient(180deg,#b81f2b 0 38%,#6c1820 50%,#24262c 62%,#14151a 100%)"><i class="a" style="left:9px;top:12px;width:19px;height:11px;border-radius:30% 30% 10% 10%;background:#1a1c22"></i><i class="a" style="left:11px;top:14px;width:15px;height:4px;background:#aab4c4;opacity:.7"></i></div>
  <div class="a c" style="left:738px;top:661.500px;width:37px;height:37px;overflow:hidden;background:radial-gradient(circle at 50% 55%,#8a8a8a 0 20%,#4a4a4a 45%,#202020 100%)"><i class="a" style="left:9px;top:5px;width:19px;height:7px;border-radius:50% 50% 20% 20%;background:#101010"></i><i class="a" style="left:13px;top:14px;width:11px;height:12px;border-radius:40%;background:#dcdcdc"></i></div>
  <div class="a c" style="left:813.500px;top:661.500px;width:37px;height:37px;overflow:hidden;background:linear-gradient(180deg,#9fc6dc 0 24%,#5f98a8 36%,#3c6f7c 60%,#2f5a52 100%)"><i class="a" style="left:8px;top:12px;width:20px;height:14px;border-radius:30%;background:#3a86a8;opacity:.8"></i><i class="a" style="left:0;top:4px;width:8px;height:26px;background:#2a4a3a;opacity:.7"></i></div>
  <div class="a c" style="left:888.500px;top:661.500px;width:37px;height:37px;overflow:hidden;background:#050505"><i class="a" style="left:3px;top:8px;width:16px;height:22px;border-radius:50% 40% 40% 50%;background:#f4f4f4"></i><i class="a" style="left:16px;top:3px;width:18px;height:10px;border-radius:50%;background:#e8e8e8;transform:rotate(25deg)"></i><i class="a" style="left:8px;top:13px;width:7px;height:5px;background:#111;border-radius:40%"></i><i class="a" style="left:22px;top:16px;width:10px;height:3px;background:#ddd;transform:rotate(-30deg)"></i></div>
</div>

<div id="tiles" class="a" style="left:0;top:0">
  <div class="tile" style="left:267px;top:95.200px;background:#77cc4f"><svg class="avs" viewBox="-36 -36 72 72" width="72" height="72" ><circle r="26.300" fill="#040404"/>
<ellipse cx="0" cy="-1" rx="13" ry="9.500" fill="#b5714f"/><ellipse cx="-2" cy="3" rx="11" ry="3.500" fill="#c98a66"/>
<circle cx="-2.500" cy="-15.500" r="5.200" fill="#bb7c5b"/><path d="M-7.500-18.500c1-4 9-4 10 0z" fill="#4a3b52"/>
<rect x="-19" y="8.800" width="38" height="9.200" rx="4.500" fill="#3cf028"/>
<text x="0" y="15.300" font-size="5" font-weight="bold" text-anchor="middle" fill="#0a2a08" font-family="Liberation Sans, sans-serif" textLength="30" lengthAdjust="spacingAndGlyphs">LAGHLID_39</text></svg></div>
  <div class="tile" style="left:494.600px;top:95.200px;background:#11100f;box-shadow:inset 0 0 0 1.400px #6dba7b"><svg class="avs" viewBox="-36 -36 72 72" width="72" height="72" ><defs><filter id="bl2" x="-30%" y="-30%" width="160%" height="160%"><feGaussianBlur stdDeviation="1.100"/></filter><clipPath id="cp2"><circle r="25"/></clipPath></defs>
<circle r="25" fill="#161315"/>
<g clip-path="url(#cp2)"><ellipse cx="-16" cy="2" rx="8" ry="13" fill="#232123"/><ellipse cx="7" cy="-3" rx="12" ry="12" fill="#0d0b0c"/><ellipse cx="-1" cy="-7" rx="6" ry="8.500" fill="#b48c7c"/><path d="M2-17c8-2 14 4 12 14l-6-2c0-5-2-9-6-12z" fill="#0c0a0b"/><path d="M-6 2l8 2-3 6-6-1z" fill="#d6d2d2"/><path d="M-14 10c6-4 20-6 30 2v16h-30z" fill="#0c0b0d"/></g>
<g filter="url(#bl2)" fill="none" stroke-linecap="round" stroke-linejoin="round"><path d="M-27-25c6-3 12-1 18-3s14-2 22 0 12 1 15 2" stroke="#c2409e" stroke-width="9"/><path d="M27-21c2 8-1 14 1 21s-2 14-1 22" stroke="#b8248f" stroke-width="6.500"/><path d="M-17 26c8 2 14-1 22 1s17 2 22-1" stroke="#b8248f" stroke-width="5"/><path d="M-28.500-22c1 3-1 5 0 7" stroke="#c850a8" stroke-width="3.500"/></g>
<g fill="none" stroke-linecap="round"><path d="M-27-26c6-3 12-1 18-3s14-2 22 0 10 1 14 1" stroke="#f2b2dc" stroke-width="5" stroke-dasharray="3.500 2.600"/><path d="M27.500-18c2 8-1 13 1 19s-1 13 0 19" stroke="#ee7ccb" stroke-width="1.500"/><path d="M25-10l4 6-4 5 4 6-3 6" stroke="#f9b4e4" stroke-width="1"/><path d="M-14 26.500c8 2 14-1 22 1s14 1 18 0" stroke="#ee7ccb" stroke-width="1.400"/><path d="M4 24l6 4 6-4 6 4" stroke="#f9b4e4" stroke-width="1"/></g></svg></div>
  <div class="tile" style="left:722.200px;top:95.200px;background:#151515"><svg class="avs" viewBox="-36 -36 72 72" width="72" height="72" ><defs><filter id="bl3" x="-30%" y="-30%" width="160%" height="160%"><feGaussianBlur stdDeviation="1"/></filter><clipPath id="cp3"><circle r="24"/></clipPath></defs>
<circle r="24" fill="#121314"/>
<g clip-path="url(#cp3)"><path d="M-17-10c2-12 22-16 30-4 6 8 4 18-2 24l-8-6-18-2z" fill="#0a0a0b"/><path d="M-14-4c3-8 12-8 17-5l8 6c2 6-1 12-4 16l6 8-22 6-2-10c-5-4-6-12-3-21z" fill="#a6a6a8"/><path d="M-15-8c4-6 12-8 18-4l-4 8-6-3-4 6z" fill="#141415"/><path d="M-9 14l18-2 8 14h-30z" fill="#8a8c8e"/><path d="M4 0c6 2 10 8 8 16l-6-4z" fill="#101011"/></g>
<g filter="url(#bl3)" fill="none" stroke-linecap="round"><path d="M-21-21c-8 4-11 14-9 24s8 18 18 23" stroke="#2ad0e6" stroke-width="5.500"/><path d="M-16 24c8 5 20 5 28 1" stroke="#22b4cc" stroke-width="5"/><path d="M12 25c10-4 17-14 17-26" stroke="#1c5fae" stroke-width="4"/><path d="M29-2c0-8-3-14-8-17" stroke="#27b9dc" stroke-width="4"/><path d="M2-28c8-1 14 4 18 12" stroke="#2ad0e6" stroke-width="5.500"/></g>
<g fill="none" stroke-linecap="round"><path d="M-22-19c-6 4-8 12-7 20" stroke="#9af4ff" stroke-width="1.500"/><path d="M3-27.500c6 0 10 3 13 8" stroke="#9af4ff" stroke-width="1.500"/><path d="M-12 26c6 3 14 3 20 1" stroke="#7ae8f8" stroke-width="1.300"/></g></svg><div class="mod"><svg width="13" height="14"><use href="#shield"/></svg></div></div>

  <div class="tile" style="left:267px;top:225.350px;background:#b39c87"><div class="a" style="right:5.200px;bottom:5.200px;width:20.500px;height:21px;border-radius:4.500px;background:#5c4c40"><i class="a c" style="left:5.500px;top:9.500px;width:2px;height:2px;background:#f2eee8"></i><i class="a c" style="left:9.300px;top:9.500px;width:2px;height:2px;background:#f2eee8"></i><i class="a c" style="left:13.100px;top:9.500px;width:2px;height:2px;background:#f2eee8"></i></div><svg class="avs" viewBox="-36 -36 72 72" width="72" height="72" ><defs><filter id="bl4" x="-30%" y="-30%" width="160%" height="160%"><feGaussianBlur stdDeviation="1.600"/></filter><clipPath id="cp4"><circle cx="-.5" r="23"/></clipPath></defs>
<circle cx="-.5" r="26" fill="none" stroke="#8d3be0" stroke-width="8" filter="url(#bl4)"/>
<circle cx="-.5" r="23.500" fill="#d9c9b5"/>
<g clip-path="url(#cp4)"><ellipse cx="-1.500" cy="1.500" rx="11.500" ry="13.500" fill="#a87656"/><path d="M-10-9c2-10 18-13 26-6l2 7c-8-4-18-4-28-1z" fill="#ebe4dc"/><path d="M6-6c6-1 9 3 9 8s-2 9-5 11l-3-6z" fill="#3a2b22"/><ellipse cx="-10.500" cy="1" rx="4" ry="1.800" fill="#2a1c16" transform="rotate(-18 -10.500 1)"/><path d="M-12 15c8 0 18-4 28-8l6 18h-34z" fill="#1c191b"/><path d="M-10 15c6 0 14-3 20-6l1 2c-6 4-14 6-20 6z" fill="#c9b9a0"/></g>
<g fill="none" stroke="#fff" stroke-width="1.700" stroke-linejoin="round" stroke-linecap="round"><path d="M-28-22l6 1-3 4 5 4 4-1 3 2"/><path d="M22-21l2 4-4 3 4 4-2 5 3 2"/><path d="M-21 15l-4 2 2 4-3 3 5 3"/></g>
<path d="M18 14v9l-2.500-2-1.500 1.500 4 6h7l1.500-4v-7l-1.500-1v3.500h-1v-4.500l-1.500-.5v5h-1v-5.500l-1.500-.5v6h-1v-8.500z" fill="#fff" stroke="#5a5a66" stroke-width=".5"/></svg><div class="mod"><svg width="13" height="14"><use href="#shield"/></svg></div></div>
  <div class="tile" style="left:494.600px;top:225.350px;background:#4e4e4c"><svg class="avs" viewBox="-36 -36 72 72" width="72" height="72" ><defs><clipPath id="cp5"><ellipse cx="1.500" cy="-6" rx="25.500" ry="21"/></clipPath></defs>
<ellipse cx="1.500" cy="-6" rx="25.500" ry="21" fill="#2b2b2d"/>
<g clip-path="url(#cp5)"><path d="M-24-16c10-10 30-12 44 0" stroke="#55565a" stroke-width="2" fill="none"/><path d="M-20-10c10-8 30-8 44 2" stroke="#5c5d60" stroke-width="1.800" fill="none"/><path d="M-12-4c10-6 26-4 40 6" stroke="#4c4d50" stroke-width="1.800" fill="none"/><path d="M-19-16c4-3 8-3 10 0 2 6 8 12 20 24l-4 10h-30l-4-16z" fill="#d9d2ca"/><path d="M-14-12c3 6 8 12 16 18" stroke="#6a6660" stroke-width="1.500" fill="none"/></g>
<path d="M-29 0c0 9 0 15 2 19 12 13 42 13 54 0 2-4 2-10 2-19-12 12-46 12-58 0z" fill="#a09479"/>
<path d="M-27 4c12 12 42 12 54 0" stroke="#b4a88c" stroke-width="1.500" fill="none"/>
<path d="M-26 10c12 11 40 11 52 0" stroke="#3c362c" stroke-width="4" stroke-dasharray="3 2.600" fill="none"/>
<path d="M-24 18c12 10 36 10 48 0" stroke="#3c362c" stroke-width="3.500" stroke-dasharray="3 2.600" fill="none"/></svg><div class="mod"><svg width="13" height="14"><use href="#shield"/></svg></div></div>
  <div class="tile" style="left:722.200px;top:225.350px;background:#8c6c66"><svg class="avs" viewBox="-36 -36 72 72" width="72" height="72" ><defs><linearGradient id="g6" x1="0" x2="1"><stop offset="0" stop-color="#ddd2c2"/><stop offset=".36" stop-color="#d5c3ac"/><stop offset=".48" stop-color="#a9657b"/><stop offset=".62" stop-color="#a06a80"/><stop offset=".7" stop-color="#9e9ea8"/><stop offset="1" stop-color="#a08a90"/></linearGradient><clipPath id="cp6"><circle cx="-.5" r="27"/></clipPath></defs>
<circle cx="-.5" r="27" fill="url(#g6)"/>
<g clip-path="url(#cp6)"><path d="M-8 27c2-10 8-14 30-12v14z" fill="#7a5a50" opacity=".8"/><path d="M4-14c8-4 18-2 22 4l-2 14h-18z" fill="#8e8e98" opacity=".9"/><path d="M-28-28h18l-6 30-12 8z" fill="#e4dccd" opacity=".7"/></g>
<circle cx="-22" cy="-18.500" r="8" fill="#fff" stroke="#3a3038" stroke-width="1"/><path d="M-16-13l3 3-5-1z" fill="#fff" stroke="#3a3038" stroke-width=".6"/>
<path d="M-26.500-21.500c1-1.500 3-.5 1.500 2.500-3-1.500-3-3.500-1.500-2.500zM-19.500-21.500c1-1.500 3-.5 1.500 2.500-3-1.500-3-3.500-1.500-2.500z" fill="#c83a6a" stroke="#c83a6a" stroke-width="1.600"/><ellipse cx="-22" cy="-15" rx="1.800" ry="1.500" fill="#7a2a4a"/>
<use href="#heart" x="20" y="-22" width="10" height="11.500"/>
<path d="M-30 11c1-4 6-3 6 1 1-4 6-4 5 1-1 5-5 8-7 9-2-3-5-6-4-11z" fill="#ee6aa0" stroke="#4a2038" stroke-width=".7"/>
<path d="M-19 20c0-2 2.500-2 3 0 .5-2 3-2 3 0 0 2.500-2 4.500-3 5-1.500-1-3-2.500-3-5z" fill="#fff" stroke="#3a3038" stroke-width=".7"/>
<path d="M13-12c0-2.500 3-2.500 3.500 0 .5-2.500 3.500-2.500 3.500 0 0 3-2.500 5-3.500 5.500-1.500-1-3.500-2.500-3.500-5.500z" fill="#a64a9a" stroke="#4a2048" stroke-width=".6"/>
<path d="M12-22c0-1.600 2-1.600 2.300 0 .3-1.600 2.300-1.600 2.300 0 0 2-1.500 3.300-2.300 3.600-1-.600-2.300-1.600-2.300-3.600z" fill="#fff" stroke="#3a3038" stroke-width=".5"/>
<path d="M-17 10c0-1.500 2-1.500 2 0 .300-1.500 2-1.500 2 0 0 2-1.400 3-2 3.300-.800-.500-2-1.300-2-3.300z" fill="#8a3a5a"/></svg><div class="mod"><svg width="13" height="14"><use href="#shield"/></svg></div></div>

  <div class="tile" style="left:267px;top:355.500px;background:#958978"><svg class="avs" viewBox="-36 -36 72 72" width="72" height="72" ><defs><clipPath id="cp7"><circle cx="-.5" r="25"/></clipPath></defs>
<circle cx="-.5" r="25" fill="#b2b2b2"/>
<g clip-path="url(#cp7)"><path d="M-26-20h16l2 24-18 6z" fill="#a8acb4"/><path d="M-8 10h40v20h-40z" fill="#9c9480"/><ellipse cx="6" cy="-3.500" rx="11" ry="14" fill="#d3946e" transform="rotate(14 6 -3.500)"/><path d="M-3-15c4-9 18-10 24 0l-2 8c-4-6-14-8-20-4z" fill="#5b3d23"/><path d="M-8 26c0-8 6-10 12-10s16 2 18 10z" fill="#f0640f"/><ellipse cx="5" cy="12" rx="6" ry="3" fill="#b87858"/></g>
<circle cx="-.5" r="26.300" fill="none" stroke="#a48c42" stroke-width="2.800" stroke-dasharray="3.500 1.200"/>
<circle cx="-.5" r="27.600" fill="none" stroke="#c4b070" stroke-width="1" opacity=".7"/>
<g><path d="M-29 15c-3 2-3 8 0 12l3-1c-2-4-2-7 0-9z" fill="#c86a2a"/><path d="M-30 14.500c-1.500-.5-2.500 1-2 3l3-1z" fill="#fff"/><ellipse cx="-18" cy="26" rx="8" ry="5" fill="#e08a3c"/><path d="M-24 12l2-5 4 3h5l4-3 2 5c1 6-3 10-8.500 10s-9.500-4-8.500-10z" fill="#eda055"/><ellipse cx="-19" cy="14.500" rx="2.200" ry="1.700" fill="#7ec850" stroke="#3a2a18" stroke-width=".5"/><ellipse cx="-11" cy="14.500" rx="2.200" ry="1.700" fill="#7ec850" stroke="#3a2a18" stroke-width=".5"/><path d="M-16 18.500h2l-1 1.500z" fill="#c84a3a"/><path d="M-21 24h2v6h-2zM-15 24h2v6h-2z" fill="#fff5e0"/></g></svg><div class="mod"><svg width="13" height="14"><use href="#shield"/></svg></div></div>
  <div class="tile" style="left:494.600px;top:355.500px;background:#050505"><svg class="avs" viewBox="-36 -36 72 72" width="72" height="72" ><defs><filter id="bl8" x="-50%" y="-200%" width="200%" height="500%"><feGaussianBlur stdDeviation="1.600"/></filter></defs>
<circle r="27" fill="#010101"/>
<ellipse cx="0" cy="2.500" rx="21" ry="2.200" fill="#d8d8d8" opacity=".55" filter="url(#bl8)"/>
<text x="-14.600" y="4.500" font-family="Liberation Sans, sans-serif" font-weight="bold" fill="#f6f6f6" textLength="28" lengthAdjust="spacingAndGlyphs"><tspan font-size="16.500">L</tspan><tspan font-size="12.500">AZZ</tspan></text>
<text x="-14.500" y="8.800" font-family="Liberation Sans, sans-serif" font-weight="bold" font-size="2.600" fill="#8a8a8a" textLength="28" lengthAdjust="spacing">GAMING</text></svg><div class="mod"><svg width="13" height="14"><use href="#shield"/></svg></div></div>
  <div class="tile" style="left:722.200px;top:355.500px;background:#161819"><svg class="avs" viewBox="-36 -36 72 72" width="72" height="72" ><defs><clipPath id="cp9"><circle r="27"/></clipPath></defs>
<circle r="27" fill="#14191b"/>
<g clip-path="url(#cp9)"><path d="M-16-16c6-8 26-10 32 0l2 14h-36z" fill="#1c3432"/><path d="M-14-18l3-3 2 3 3 1-3 2-2 3-2-3-3-1z" fill="#5a8a7a"/><path d="M-6 2c4-4 18-4 24 2v12h-26z" fill="#121416"/><ellipse cx="5" cy="-9" rx="7.500" ry="9.500" fill="#8b5b48"/><path d="M-3-14c2-8 16-8 17 0l-1 2c-4-3-11-3-15 0z" fill="#0c0c0d"/><path d="M-2-10h6M6-10h6" stroke="#1a1a1c" stroke-width="1.600"/><path d="M-10 26l10.500-11 10.500 11z" fill="#cfa6a2"/><path d="M.5 13v13" stroke="#b0807a" stroke-width=".8"/><path d="M16 22h10v6h-10z" fill="#c8707e"/><path d="M-27 18c6 6 14 8 18 8" stroke="#4a3a6a" stroke-width="2" fill="none"/></g>
<rect x="-18" y="2.500" width="38" height="9" rx="1" fill="#0e2428" opacity=".7"/>
<text x="1" y="10" font-family="Liberation Sans, sans-serif" font-weight="bold" font-size="9.400" fill="#6cb9c9" text-anchor="middle" textLength="35" lengthAdjust="spacingAndGlyphs">BASTOS</text>
<text x="1" y="15.300" font-family="Liberation Sans, sans-serif" font-weight="bold" font-size="5" fill="#a8541f" text-anchor="middle" textLength="22" lengthAdjust="spacingAndGlyphs">GAMING</text></svg><div class="mod"><svg width="13" height="14"><use href="#shield"/></svg></div></div>

  <div class="tile" style="left:267px;top:485.650px;background:#7f5b50"><svg class="avs" viewBox="-36 -36 72 72" width="72" height="72" ><defs><clipPath id="cp10"><circle cx="-.5" cy="1" r="25.500"/></clipPath><filter id="bl10"><feGaussianBlur stdDeviation=".6"/></filter></defs>
<g opacity=".72" filter="url(#bl10)"><circle cx="-.5" cy="1" r="25.500" fill="#c6beaa"/>
<g clip-path="url(#cp10)"><path d="M-16-24h30l6 10-4 24h-14z" fill="#d2d0c0"/><ellipse cx="-19" cy="5" rx="8" ry="16" fill="#a8806a"/><ellipse cx="-.500" cy="-5.500" rx="8.500" ry="9.500" fill="#a8705a"/><ellipse cx="5" cy="-13" rx="11.500" ry="7.500" fill="#2c2826" transform="rotate(12 5 -13)"/><path d="M-14 14c0-10 8-10 14-10s14 2 14 10l-4 8h-20z" fill="#a81f38"/><circle cx="18" cy="14" r="7" fill="#a9c1a1"/><path d="M-12 20c6 4 18 4 26 0v10h-26z" fill="#c8b8a0"/></g></g></svg><div class="mute"><svg width="12" height="12"><use href="#micoff"/></svg></div></div>
  <div class="tile" style="left:494.600px;top:485.650px;background:#3c1f28"><svg class="avs" viewBox="-36 -36 72 72" width="72" height="72" ><defs><clipPath id="cp11"><ellipse cx=".5" cy="1.700" rx="27" ry="24.500"/></clipPath><filter id="bl11"><feGaussianBlur stdDeviation=".7"/></filter></defs>
<ellipse cx=".5" cy="1.700" rx="27" ry="24.500" fill="#47131b"/>
<g clip-path="url(#cp11)" filter="url(#bl11)"><ellipse cx="1.500" cy="-3" rx="15" ry="11" fill="#a8a0b6"/><path d="M-12-6c4-7 12-9 20-7l-10 9z" fill="#d8d4e4"/><ellipse cx="0" cy="8" rx="12.500" ry="4.500" fill="#b0607e"/><ellipse cx="-21.500" cy="4.500" rx="4.500" ry="8.500" fill="#b81a26"/><ellipse cx="23.500" cy="4.500" rx="4" ry="8" fill="#b81a26"/><ellipse cx="11" cy="-17" rx="12" ry="3.800" fill="#8a828c" transform="rotate(22 11 -17)"/><path d="M-14-2c-2 6-1 10 0 14" stroke="#1a0a0e" stroke-width="3" fill="none"/><path d="M12-10c4 2 6 6 6 10" stroke="#2a1018" stroke-width="2.500" fill="none"/><path d="M-18 16c10 5 28 5 38 0v12h-38z" fill="#3a1018"/><path d="M-12 19c8 2 18 2 26 0" stroke="#6a3040" stroke-width="1.500" fill="none"/></g></svg><div class="mod"><svg width="13" height="14"><use href="#shield"/></svg></div><div class="mute"><svg width="12" height="12"><use href="#micoff"/></svg></div></div>
  <div class="tile" style="left:722.200px;top:485.650px;background:#c5c6d5"><svg class="avs" viewBox="-36 -36 72 72" width="72" height="72" ><defs><clipPath id="cp12"><circle cx="-.5" r="25"/></clipPath><linearGradient id="g12" x1="0" y1="0" x2="0" y2="1"><stop offset="0" stop-color="#e4e6ee"/><stop offset=".45" stop-color="#c2c8dc"/><stop offset="1" stop-color="#8a94b0"/></linearGradient></defs>
<circle cx="-.5" r="25" fill="url(#g12)"/>
<g clip-path="url(#cp12)"><path d="M-26-8c8-2 16 0 24 6l-24 8z" fill="#5c6c94"/><path d="M-26-2c10-6 20 0 30 10l6 20h-36z" fill="#3b4531"/><path d="M-22 8c8-4 18 0 24 8" stroke="#566046" stroke-width="2" fill="none"/><path d="M-2 8c2-8 10-12 18-10 6 6 8 20 6 30h-24z" fill="#282425"/><circle cx="7" cy="-4" r="5.500" fill="#a27a62"/><path d="M4-10c4-4 12-2 12 6l-4 4c0-4-2-8-8-10z" fill="#1a1718"/><path d="M2 0l8 2-2 4-6-2z" fill="#c0a090"/></g>
<circle cx="-.5" r="26.200" fill="none" stroke="#49b6b6" stroke-width="3" stroke-dasharray="4 1"/>
<circle cx="-.5" r="28" fill="none" stroke="#8ad8d8" stroke-width="1" opacity=".6"/>
<g><ellipse cx="-18.500" cy="20" rx="8" ry="10" fill="#e2a23e"/><path d="M-25 11l2-3 3 3zM-15 11l2-3 2 3z" fill="#c88428"/><ellipse cx="-18.500" cy="24.500" rx="5" ry="3.500" fill="#f0c878"/><rect x="-30" y="22" width="22" height="4.500" rx="2" fill="#6f8fd2" stroke="#3a4a8a" stroke-width=".5"/><path d="M-24 29h4v3h-4zM-16 29h4v3h-4z" fill="#b87828"/></g></svg><div class="mod"><svg width="13" height="14"><use href="#shield"/></svg></div><div class="mute" style="background:rgba(58,58,64,.82)"><svg width="12" height="12"><use href="#deaf"/></svg></div></div>
</div>

<div class="a" style="left:256px;top:21px;width:1024px;height:1px;background:#18181b"></div>
<!-- ================= CHAT ================= -->
<div id="chat" class="a"></div>
<div class="a" style="left:962.00px;top:53.50px;width:318.00px;height:1.00px;background:#1a1a1d;"></div>
<svg class="a" style="left:971px;top:32.500px" width="13" height="13" viewBox="0 0 24 24"><path d="M12 2.500a9.500 9.500 0 1 1-4.600 17.800L2.500 21.500l1.300-4.800A9.500 9.500 0 0 1 12 2.500z" fill="#8e9097"/></svg>
<div class="a" style="left:992.00px;top:33.00px;width:11.00px;height:10.00px;background:#4a90e2;border-radius:1.5px;"><div class="t" style="left:0.00px;top:-1.87px;font-size:3.60px;color:#fff;font-weight:bold;left:1.2px;top:3.2px;">NEW</div></div>
<div class="t" style="left:1008.75px;top:32.85px;font-size:11.50px;color:#ececee;transform:scaleX(0.887);transform-origin:0 50%;">· Meeting Citizen [ UPDATE]</div>
<svg class="a" style="left:1259px;top:34px" width="9" height="9" viewBox="0 0 12 12"><path d="M1.500 1.500l9 9M10.500 1.500l-9 9" stroke="#8a8c93" stroke-width="1.500" stroke-linecap="round"/></svg>
<div class="a" style="left:965.50px;top:54.50px;width:303.50px;height:22.50px;background:#5865f2;border-radius:0 0 7px 7px;"></div>
<div class="t" style="left:980.00px;top:61.40px;font-size:9.60px;color:#fff;font-weight:bold;transform:scaleX(0.851);transform-origin:0 50%;">392 new messages since 00:11</div>
<div class="t" style="left:1181.20px;top:61.40px;font-size:9.60px;color:#fff;font-weight:bold;transform:scaleX(0.889);transform-origin:0 50%;">Mark as Read</div>
<svg class="a" style="left:1241.500px;top:60.500px" width="11.500" height="11.500" viewBox="0 0 24 24"><path d="M11 2.500a8.500 8.500 0 0 1 8.400 9.600 6 6 0 0 0-7.300 7.300l-1.100.1a8.500 8.500 0 0 1-4.100-1.100L2.500 19.500l1.200-4.300A8.500 8.500 0 0 1 11 2.500z" fill="#fff"/><path d="M14.500 18l2.300 2.300 4.700-4.800" stroke="#fff" stroke-width="2.200" fill="none" stroke-linecap="round" stroke-linejoin="round"/></svg>
<div class="t" style="left:1055.80px;top:21.18px;font-size:15.80px;color:#53fc18;font-weight:bold;letter-spacing:2.40px;transform:scaleX(1.124);transform-origin:0 50%;-webkit-text-stroke:2.3px #53fc18;z-index:5;">KICK</div>
<div class="t" style="left:1114.00px;top:21.36px;font-size:22.80px;color:#fff;font-weight:bold;transform:scaleX(0.713);transform-origin:0 50%;-webkit-text-stroke:1px #fff;z-index:5;">.COM/TEDDY-OMG</div>
<div class="a c" style="left:971.05px;top:78.75px;width:27.50px;height:27.50px;background:linear-gradient(90deg,#5c4638 0 42%,#2a2220 42% 50%,#dfe3df 50% 78%,#7a8a84 78%);overflow:hidden;box-shadow:inset 0 0 0 1.6px #4aa98b;"><i class="a" style="left:6px;top:3px;width:8px;height:10px;border-radius:50%;background:#8a6a54"></i><i class="a" style="left:14px;top:8px;width:8px;height:12px;border-radius:40%;background:#f4f6f4"></i></div><svg class="a" style="left:970px;top:97.00px" width="12" height="11" viewBox="0 0 24 22"><circle cx="7" cy="8" r="6" fill="#e8708a"/><circle cx="17" cy="8" r="6" fill="#e8708a"/><circle cx="12" cy="15" r="6" fill="#e8708a"/><circle cx="8" cy="9" r="2.200" fill="#8a2a40"/><circle cx="16" cy="9" r="2.200" fill="#8a2a40"/></svg>
<div class="t" style="left:1008.75px;top:79.48px;font-size:11.00px;color:#d3dd4c;font-weight:bold;transform:scaleX(0.846);transform-origin:0 50%;">C y k o</div>
<div class="t" style="left:1041.00px;top:79.50px;font-size:10.00px;color:#c9c9b4;font-family:'DejaVu Sans','Liberation Sans',sans-serif;direction:rtl;transform:scaleX(.82);transform-origin:0 50%;">کي منبع</div>
<svg class="a" style="left:1069.50px;top:79.20px;" width="12.50" height="10.50"><use href="#wing"/></svg>
<svg class="a" style="left:1085.500px;top:79.20px" width="13" height="11.500" viewBox="0 0 26 23"><path d="M13 14C6 9 4 6.500 4 4 4 1.800 5.800.5 7.800.5c1.900 0 3.900 1.200 5.200 3.300C14.300 1.700 16.300.5 18.200.5 20.200.5 22 1.800 22 4c0 2.500-2 5-9 10z" fill="#3fae58"/><path d="M1 12l4 .5 8 5 8-5 4-.5v9.500H1z" fill="#3fae58"/></svg>
<div class="t" style="left:1101.50px;top:81.03px;font-size:8.60px;color:#6f7178;transform:scaleX(0.874);transform-origin:0 50%;">00:13</div>
<div class="t" style="left:1008.75px;top:93.68px;font-size:11.20px;color:#d4d5d9;transform:scaleX(0.964);transform-origin:0 50%;">ilu</div>
<div class="a c" style="left:971.05px;top:121.75px;width:27.50px;height:27.50px;background:radial-gradient(circle at 45% 62%,#d8d8d8 0 14%,#8c8c8c 26%,#4a4a4a 48%,#262626 75%);overflow:hidden;"><i class="a" style="left:4px;top:3px;width:18px;height:8px;border-radius:50% 50% 20% 20%;background:#161616"></i><i class="a" style="left:16px;top:14px;width:9px;height:8px;border-radius:50%;background:#6a6a6a"></i></div>
<div class="t" style="left:1008.75px;top:121.82px;font-size:11.60px;color:#d3dd4c;font-weight:bold;transform:scaleX(0.815);transform-origin:0 50%;">verdi</div>
<div class="a" style="left:1035.00px;top:122.70px;width:33.00px;height:10.20px;background:#202125;border-radius:3.0px;box-shadow:0 0 0 .6px #34353a;"></div><svg class="a" style="left:1036.80px;top:123.60px" width="9" height="8.5" viewBox="0 0 36 36"><path d="M18 33.500C6.500 25.500 1.200 19.300 1.200 12.300 1.200 6.900 5.300 3 10.200 3c3.200 0 6.100 1.700 7.800 4.500C19.700 4.700 22.600 3 25.800 3c4.900 0 9 3.900 9 9.300 0 7-5.300 13.200-16.800 21.200z" fill="#5ed06a"/></svg><div class="t" style="left:1047.00px;top:124.00px;font-size:7.60px;color:#eeeef0;font-weight:bold;transform:scaleX(0.996);transform-origin:0 50%;">KICK</div>
<svg class="a" style="left:1071.00px;top:122.20px;" width="12.50" height="10.50"><use href="#wing"/></svg>
<div class="t" style="left:1086.20px;top:124.03px;font-size:8.60px;color:#6f7178;transform:scaleX(0.874);transform-origin:0 50%;">00:13</div>
<svg class="a" style="left:1008.75px;top:136.30px;" width="32.50" height="29.50"><use href="#heart"/></svg>
<div class="a c" style="left:971.05px;top:182.25px;width:27.50px;height:27.50px;background:linear-gradient(180deg,#1a2440 0 18%,#3a4c7c 30%,#1c2848 48%,#26345c 62%,#cfd3dc 66% 70%,#1a2238 74%);overflow:hidden;"><i class="a" style="left:5px;top:5px;width:4px;height:4px;border-radius:50%;background:#d8dce6"></i><i class="a" style="left:12px;top:4px;width:4px;height:4px;border-radius:50%;background:#d8dce6"></i><i class="a" style="left:19px;top:6px;width:4px;height:4px;border-radius:50%;background:#c8ccd8"></i><i class="a" style="left:16px;top:17px;width:1.5px;height:8px;background:#e8eaf0"></i></div>
<div class="t" style="left:1008.75px;top:182.75px;font-size:11.00px;color:#1f5c39;font-weight:bold;transform:scaleX(0.843);transform-origin:0 50%;">asta_as⁷⁷58</div>
<svg class="a" style="left:1064.500px;top:182.00px" width="13" height="13" viewBox="0 0 26 26"><circle cx="13" cy="13" r="9.500" fill="none" stroke="#f0f0f2" stroke-width="2.400"/><circle cx="13" cy="13" r="11.800" fill="none" stroke="#f0f0f2" stroke-width="2.600" stroke-dasharray="3 3.180"/><circle cx="13" cy="12" r="4.200" fill="#f0f0f2"/><rect x="10.800" y="14.500" width="4.400" height="3.600" fill="#f0f0f2"/><circle cx="11.300" cy="11.800" r="1.100" fill="#111"/><circle cx="14.700" cy="11.800" r="1.100" fill="#111"/></svg>
<div class="t" style="left:1080.20px;top:184.63px;font-size:8.60px;color:#6f7178;transform:scaleX(0.874);transform-origin:0 50%;">00:13</div>
<svg class="a" style="left:1008.75px;top:197.30px;" width="32.50" height="29.50"><use href="#heart"/></svg>
<div class="a c" style="left:971.05px;top:243.05px;width:27.50px;height:27.50px;background:radial-gradient(circle at 50% 40%,#3a3836 0 30%,#262524 60%,#1a1a1a 100%);overflow:hidden;"><i class="a" style="left:8.500px;top:5px;width:10px;height:11px;border-radius:45%;background:#8c6c5c"></i><i class="a" style="left:7.500px;top:2.500px;width:12px;height:6px;border-radius:50% 50% 20% 20%;background:#2a2624"></i><i class="a" style="left:3px;top:17px;width:22px;height:12px;border-radius:50% 50% 0 0;background:#2c2c2e"></i></div>
<div class="t" style="left:1008.75px;top:243.70px;font-size:11.00px;color:#d3dd4c;font-weight:bold;transform:scaleX(0.861);transform-origin:0 50%;">BIKAA</div>
<svg class="a" style="left:1041.80px;top:243.20px;" width="12.50" height="10.50"><use href="#wing"/></svg>
<div class="t" style="left:1057.30px;top:245.03px;font-size:8.60px;color:#6f7178;transform:scaleX(0.874);transform-origin:0 50%;">00:13</div>
<div class="t" style="left:1008.75px;top:258.30px;font-size:11.20px;color:#d4d5d9;transform:scaleX(0.927);transform-origin:0 50%;">wwwww</div>
<svg class="a" style="left:968.5px;top:282.00px;overflow:visible" width="33" height="33" viewBox="-16.500 -16.500 33 33"><defs><filter id="blb298"><feGaussianBlur stdDeviation="1"/></filter></defs><circle r="13.500" fill="none" stroke="#6848c0" stroke-width="5.500" filter="url(#blb298)"/><path d="M-13-9c3-6 10-8 16-6M12 8c-3 6-10 8-16 6M-14 6c-2-4-1-8 0-10" stroke="#9a78e8" stroke-width="1.600" fill="none" stroke-linecap="round"/><circle r="11" fill="#2a2a30"/><path d="M-9-3h8v9h-8z" fill="#18181c"/><path d="M0-2h9v8h-9z" fill="#7c8474"/><path d="M-8-8h14v5h-14z" fill="#3c3848"/></svg>
<div class="t" style="left:1008.75px;top:286.89px;font-size:10.60px;color:#d3dd4c;font-weight:bold;transform:scaleX(0.900);transform-origin:0 50%;">Banned</div>
<div class="t" style="left:1047.50px;top:283.90px;font-size:14.60px;color:#e0678f;font-weight:bold;transform:scaleX(0.987);transform-origin:0 50%;">Zakaria00070</div>
<div class="t" style="left:1142.00px;top:283.90px;font-size:14.60px;color:#fff;font-weight:bold;transform:scaleX(0.897);transform-origin:0 50%;">: Best stream today</div>
<svg class="a" style="left:1008.75px;top:301.80px;" width="32.00" height="28.50"><use href="#heart"/></svg>
<div class="t" style="left:1047.50px;top:309.90px;font-size:14.60px;color:#cd2650;font-weight:bold;transform:scaleX(0.918);transform-origin:0 50%;">Simosophe_Fan</div>
<div class="t" style="left:1155.00px;top:309.90px;font-size:14.60px;color:#fff;font-weight:bold;transform:scaleX(0.891);transform-origin:0 50%;">: Hadchi fchkel</div>
<div class="a c" style="left:971.05px;top:348.45px;width:27.50px;height:27.50px;background:radial-gradient(circle at 45% 62%,#d8d8d8 0 14%,#8c8c8c 26%,#4a4a4a 48%,#262626 75%);overflow:hidden;"><i class="a" style="left:4px;top:3px;width:18px;height:8px;border-radius:50% 50% 20% 20%;background:#161616"></i><i class="a" style="left:16px;top:14px;width:9px;height:8px;border-radius:50%;background:#6a6a6a"></i></div>
<div class="t" style="left:1008.75px;top:346.82px;font-size:11.60px;color:#d3dd4c;font-weight:bold;transform:scaleX(0.815);transform-origin:0 50%;">verdi</div>
<div class="a" style="left:1034.80px;top:347.70px;width:33.00px;height:10.20px;background:#202125;border-radius:3.0px;box-shadow:0 0 0 .6px #34353a;"></div><svg class="a" style="left:1036.60px;top:348.60px" width="9" height="8.5" viewBox="0 0 36 36"><path d="M18 33.500C6.500 25.500 1.200 19.300 1.200 12.300 1.200 6.900 5.300 3 10.200 3c3.200 0 6.100 1.700 7.800 4.500C19.700 4.700 22.600 3 25.800 3c4.900 0 9 3.900 9 9.300 0 7-5.300 13.200-16.800 21.200z" fill="#5ed06a"/></svg><div class="t" style="left:1046.80px;top:349.00px;font-size:7.60px;color:#eeeef0;font-weight:bold;transform:scaleX(0.996);transform-origin:0 50%;">KICK</div>
<svg class="a" style="left:1070.50px;top:347.20px;" width="12.50" height="10.50"><use href="#wing"/></svg>
<div class="t" style="left:1086.20px;top:349.03px;font-size:8.60px;color:#6f7178;transform:scaleX(0.874);transform-origin:0 50%;">00:13</div>
<svg class="a" style="left:1008.75px;top:362.20px;" width="32.00" height="29.00"><use href="#heart"/></svg>
<svg class="a" style="left:1040.60px;top:362.20px;" width="32.00" height="29.00"><use href="#heart"/></svg>
<div class="a c" style="left:970.50px;top:406.50px;width:29.00px;height:29.00px;background:radial-gradient(circle at 55% 55%,#0a0808 0 36%,#5a2a2c 58%,#2a0c10 100%);overflow:hidden;"><i class="a" style="left:14px;top:1px;width:11px;height:7px;border-radius:40%;background:#9a1820"></i><i class="a" style="left:9px;top:10px;width:14px;height:10px;border-radius:30%;background:#060606"></i><i class="a" style="left:5px;top:20px;width:18px;height:5px;border-radius:40%;background:#5a1218"></i></div><div class="a c" style="left:970.5px;top:428.00px;width:7px;height:7px;background:#e8e8ea;border:1px solid #111"></div>
<div class="t" style="left:1008.75px;top:408.35px;font-size:10.50px;color:#d3dd4c;font-weight:bold;font-family:'Liberation Serif','DejaVu Serif',serif;transform:scaleX(0.996);transform-origin:0 50%;">Jrhb</div>
<div class="t" style="left:1033.50px;top:408.20px;font-size:10.80px;color:#d3dd4c;font-weight:bold;font-style:italic;font-family:'Liberation Serif','DejaVu Serif',serif;transform:scaleX(0.970);transform-origin:0 50%;">YOUCEF</div>
<div class="a" style="left:1079.70px;top:408.10px;width:36.50px;height:10.20px;background:#202125;border-radius:3.0px;box-shadow:0 0 0 .6px #34353a;"></div><svg class="a" style="left:1081.50px;top:409.00px" width="9" height="8.5" viewBox="0 0 18 17"><path d="M2 10c0-4 3-6 7-6 1-2 3-3 5-3-1 1-1 2-1 3 2 1 3 3 3 6s-3 6-7 6-7-3-7-6z" fill="#a8dcd8"/><circle cx="9" cy="10" r="3" fill="#e8f8f4"/></svg><div class="t" style="left:1091.70px;top:409.40px;font-size:7.60px;color:#eeeef0;font-weight:bold;transform:scaleX(1.002);transform-origin:0 50%;">CORX</div>
<svg class="a" style="left:1119.80px;top:407.60px;" width="12.50" height="10.50"><use href="#wing"/></svg>
<div class="t" style="left:1135.20px;top:409.43px;font-size:8.60px;color:#6f7178;transform:scaleX(0.874);transform-origin:0 50%;">00:13</div>
<div class="t" style="left:1008.75px;top:422.84px;font-size:10.50px;color:#d4d5d9;font-family:'DejaVu Sans','Liberation Sans',sans-serif;transform:scaleX(0.746);transform-origin:0 50%;direction:rtl;">الله يبارك</div>
<div class="a c" style="left:971.05px;top:451.05px;width:27.50px;height:27.50px;background:radial-gradient(circle at 50% 40%,#3a3836 0 30%,#262524 60%,#1a1a1a 100%);overflow:hidden;"><i class="a" style="left:8.500px;top:5px;width:10px;height:11px;border-radius:45%;background:#8c6c5c"></i><i class="a" style="left:7.500px;top:2.500px;width:12px;height:6px;border-radius:50% 50% 20% 20%;background:#2a2624"></i><i class="a" style="left:3px;top:17px;width:22px;height:12px;border-radius:50% 50% 0 0;background:#2c2c2e"></i></div>
<div class="t" style="left:1008.75px;top:451.80px;font-size:11.00px;color:#d3dd4c;font-weight:bold;transform:scaleX(0.861);transform-origin:0 50%;">BIKAA</div>
<svg class="a" style="left:1041.80px;top:451.30px;" width="12.50" height="10.50"><use href="#wing"/></svg>
<div class="t" style="left:1057.50px;top:453.13px;font-size:8.60px;color:#6f7178;transform:scaleX(0.874);transform-origin:0 50%;">00:13</div>
<div class="t" style="left:1008.75px;top:466.50px;font-size:11.20px;color:#d4d5d9;transform:scaleX(0.927);transform-origin:0 50%;">www</div>
<div class="a c" style="left:971.05px;top:494.75px;width:27.50px;height:27.50px;background:linear-gradient(100deg,#f0dcd4 0 16%,#c21a28 30%,#8a101c 52%,#d02030 70%,#e8c8c0 92%);overflow:hidden;"><i class="a" style="left:9px;top:2px;width:12px;height:9px;border-radius:40%;background:#a8121e"></i><i class="a" style="left:2px;top:15px;width:9px;height:10px;border-radius:40%;background:#f0e4dc"></i><i class="a" style="left:14px;top:14px;width:8px;height:12px;background:#7a0c16"></i></div>
<div class="t" style="left:1008.75px;top:495.10px;font-size:11.00px;color:#d3dd4c;font-weight:bold;transform:scaleX(0.888);transform-origin:0 50%;">Fathi-Valentino</div>
<div class="a" style="left:1082.00px;top:495.30px;width:35.50px;height:10.20px;background:#202125;border-radius:3.0px;box-shadow:0 0 0 .6px #34353a;"></div><svg class="a" style="left:1083.80px;top:495.90px" width="9" height="9" viewBox="0 0 18 18"><rect x="1" y="2" width="16" height="15" rx="3" fill="#a078e0"/><path d="M4 2l2-2 3 3 3-3 2 2" fill="#a078e0"/><circle cx="9" cy="10" r="4" fill="#f0e8ff"/><circle cx="9" cy="10" r="1.800" fill="#5a3aa0"/></svg><div class="t" style="left:1094.00px;top:496.60px;font-size:7.60px;color:#eeeef0;font-weight:bold;transform:scaleX(0.995);transform-origin:0 50%;">GXDZ</div>
<svg class="a" style="left:1121.00px;top:494.60px;" width="12.50" height="10.50"><use href="#wing"/></svg>
<div class="t" style="left:1137.00px;top:496.43px;font-size:8.60px;color:#6f7178;transform:scaleX(0.874);transform-origin:0 50%;">00:13</div>
<div class="t" style="left:1008.75px;top:510.00px;font-size:11.20px;color:#d4d5d9;transform:scaleX(0.895);transform-origin:0 50%;">sohib l3ziz</div>
<svg class="a" style="left:968.5px;top:535.70px;overflow:visible" width="33" height="33" viewBox="-16.500 -16.500 33 33"><defs><filter id="blb552"><feGaussianBlur stdDeviation="1"/></filter></defs><circle r="13.500" fill="none" stroke="#6848c0" stroke-width="5.500" filter="url(#blb552)"/><path d="M-13-9c3-6 10-8 16-6M12 8c-3 6-10 8-16 6M-14 6c-2-4-1-8 0-10" stroke="#9a78e8" stroke-width="1.600" fill="none" stroke-linecap="round"/><circle r="11" fill="#2a2a30"/><path d="M-9-3h8v9h-8z" fill="#18181c"/><path d="M0-2h9v8h-9z" fill="#7c8474"/><path d="M-8-8h14v5h-14z" fill="#3c3848"/></svg>
<div class="t" style="left:1008.75px;top:538.59px;font-size:10.60px;color:#d3dd4c;font-weight:bold;transform:scaleX(0.900);transform-origin:0 50%;">Banned</div>
<svg class="a" style="left:1047.30px;top:538.10px;" width="12.50" height="10.50"><use href="#wing"/></svg>
<div class="t" style="left:1062.60px;top:539.93px;font-size:8.60px;color:#6f7178;transform:scaleX(0.874);transform-origin:0 50%;">00:13</div>
<svg class="a" style="left:1008.75px;top:553.00px;" width="32.50" height="29.30"><use href="#heart"/></svg>
<div class="a c" style="left:971.05px;top:598.25px;width:27.50px;height:27.50px;background:radial-gradient(circle at 50% 40%,#3a3836 0 30%,#262524 60%,#1a1a1a 100%);overflow:hidden;"><i class="a" style="left:8.500px;top:5px;width:10px;height:11px;border-radius:45%;background:#8c6c5c"></i><i class="a" style="left:7.500px;top:2.500px;width:12px;height:6px;border-radius:50% 50% 20% 20%;background:#2a2624"></i><i class="a" style="left:3px;top:17px;width:22px;height:12px;border-radius:50% 50% 0 0;background:#2c2c2e"></i></div>
<div class="t" style="left:1008.75px;top:599.10px;font-size:11.00px;color:#d3dd4c;font-weight:bold;transform:scaleX(0.861);transform-origin:0 50%;">BIKAA</div>
<svg class="a" style="left:1041.80px;top:598.60px;" width="12.50" height="10.50"><use href="#wing"/></svg>
<div class="t" style="left:1057.50px;top:600.43px;font-size:8.60px;color:#6f7178;transform:scaleX(0.874);transform-origin:0 50%;">00:13</div>
<div class="t" style="left:1008.75px;top:613.90px;font-size:11.20px;color:#d4d5d9;transform:scaleX(0.927);transform-origin:0 50%;">www</div>
<div class="a c" style="left:977.4px;top:633.800px;width:4.600px;height:4.600px;background:#e6e6ea"></div>
<div class="a c" style="left:982.9px;top:633.800px;width:4.600px;height:4.600px;background:#e6e6ea"></div>
<div class="a c" style="left:988.4px;top:633.800px;width:4.600px;height:4.600px;background:#e6e6ea"></div>
<div class="t" style="left:1008.75px;top:631.80px;font-size:8.80px;color:#eeeef0;font-weight:bold;transform:scaleX(0.834);transform-origin:0 50%;">Several people</div>
<div class="t" style="left:1062.50px;top:631.80px;font-size:8.80px;color:#9a9ca3;transform:scaleX(0.870);transform-origin:0 50%;">are typing...</div>
<div class="a" style="left:966.20px;top:643.70px;width:307.60px;height:39.30px;background:#17171a;border-radius:6.0px;box-shadow:inset 0 0 0 1px #222226;"></div>
<svg class="a" style="left:979px;top:657.500px" width="11.500" height="11.500" viewBox="0 0 12 12"><path d="M6 .8v10.400M.8 6h10.400" stroke="#c4c5cb" stroke-width="1.100" stroke-linecap="round"/></svg>
<div class="t" style="left:1008.75px;top:657.40px;font-size:11.60px;color:#5d5f67;transform:scaleX(0.824);transform-origin:0 50%;">Message</div>
<div class="a" style="left:1052.00px;top:658.00px;width:11.00px;height:10.00px;background:#4a90e2;border-radius:1.5px;"><div class="t" style="left:0.00px;top:-1.87px;font-size:3.60px;color:#fff;font-weight:bold;left:1.2px;top:3.2px;">NEW</div></div>
<div class="t" style="left:1068.80px;top:657.40px;font-size:11.60px;color:#5d5f67;transform:scaleX(0.868);transform-origin:0 50%;">· Meeting Citizen [ UPDATE]</div>
<svg class="a" style="left:1222px;top:657.500px" width="12" height="12" viewBox="0 0 24 24"><circle cx="12" cy="12" r="11" fill="#aeb0b7"/><circle cx="8" cy="9.500" r="1.700" fill="#17171a"/><circle cx="16" cy="9.500" r="1.700" fill="#17171a"/><path d="M6.500 14c1.500 3 4 4 5.500 4s4-1 5.500-4z" fill="#17171a"/></svg>
<svg class="a" style="left:1248.500px;top:657px" width="14" height="13" viewBox="0 0 28 26"><circle cx="7" cy="6.500" r="5" fill="#aeb0b7"/><path d="M15.500 11.500l5-9.500 5 9.500z" fill="#aeb0b7" stroke="#aeb0b7" stroke-width="1.500" stroke-linejoin="round"/><rect x="2" y="15" width="10" height="10" rx="2.500" fill="#aeb0b7"/><path d="M20.500 14.500v11M15 20h11" stroke="#aeb0b7" stroke-width="3.200" stroke-linecap="round"/></svg>
<div class="a" style="left:1203.800px;top:613px;width:5.600px;height:79.500px;background:linear-gradient(90deg,#fff 0 62%,#2a6a66 62% 100%);border-radius:3px / 40px;z-index:6"></div>
<div class="a" style="left:1203.400px;top:640px;width:4px;height:50px;background:#fff;border-radius:2px;z-index:6"></div>

<!-- ================= USER PANEL / POPUP / LEMON ================= -->
<div class="a" style="left:5.00px;top:568.80px;width:246.50px;height:113.60px;background:#0f0f11;border-radius:7.0px;box-shadow:inset 0 0 0 1px #1e1e22;overflow:hidden;"><div class="a" style="left:0;top:74.700px;width:246.500px;height:39px;background:linear-gradient(90deg,#11183a 0,#131c46 55%,#1d2c74 88%,#2a3e9a 100%)"></div><div class="a" style="left:0;top:37.200px;width:246.500px;height:1px;background:#1e1e22"></div><div class="a" style="left:0;top:74.200px;width:246.500px;height:1px;background:#1e1e22"></div></div>
<svg class="a" style="left:14.400px;top:578.500px" width="20" height="17.500" viewBox="0 0 40 35"><path d="M2 3h36v8H26l-3 8h-6l-3-8H2z" fill="#d8d8da"/><path d="M12 11h16l-8 22z" fill="#5a8a3a" stroke="#e8e8ea" stroke-width="2"/><path d="M4 5h32v4H4z" fill="#2a2a2c"/></svg>
<div class="t" style="left:40.40px;top:581.00px;font-size:12.40px;color:#cacace;transform:scaleX(0.798);transform-origin:0 50%;">Grand Theft Auto V</div>
<div class="a" style="left:13.80px;top:615.50px;width:21.30px;height:21.30px;background:#0f2417;border-radius:5.0px;"></div>
<svg class="a" style="left:17.500px;top:619.500px" width="13.500" height="13.500" viewBox="0 0 24 24"><circle cx="4" cy="20" r="2.800" fill="#3ba55d"/><path d="M2 11a11 11 0 0 1 11 11M2 3.500A18.500 18.500 0 0 1 20.500 22" stroke="#3ba55d" stroke-width="3.400" fill="none" stroke-linecap="round"/></svg>
<div class="t" style="left:40.40px;top:613.80px;font-size:12.00px;color:#3ba55d;transform:scaleX(0.783);transform-origin:0 50%;">Voice Connected</div>
<div class="a" style="left:41.00px;top:627.80px;width:8.30px;height:7.80px;background:#4a90e2;border-radius:1.2px;"></div>
<div class="t" style="left:52.00px;top:627.70px;font-size:8.60px;color:#8d8f96;transform:scaleX(.86);transform-origin:0 50%;">· Meeting Citizen [ UPDATE] / Legends Dz Roleplay</div>
<div class="a c" style="left:12.800px;top:652px;width:22.500px;height:22.500px;background:radial-gradient(circle at 50% 55%,#ffe040 0 26%,#f0a8c0 42%,#c070e0 62%,#6a4ad0 100%)"></div>
<div class="a c" style="left:26.500px;top:666px;width:9.500px;height:9.500px;background:#d83a42;border:2px solid #11183a"></div><div class="a" style="left:29.300px;top:670.100px;width:4px;height:1.400px;background:#11183a;border-radius:1px"></div>
<div class="t" style="left:40.40px;top:652.20px;font-size:11.40px;color:#f4f4f6;font-weight:bold;transform:scaleX(0.819);transform-origin:0 50%;">Teddy</div>
<svg class="a" style="left:40.400px;top:666px" width="8" height="7" viewBox="0 0 16 14"><path d="M4 1h8c2.500 0 3.500 2 4 5l.5 5c0 2-2 3-3.500 1.500L11 10H5l-2 2.500C1.500 14-.5 13 0 11l.5-5C1 3 1.500 1 4 1z" fill="#3ba55d"/></svg>
<div class="t" style="left:49.50px;top:665.40px;font-size:8.40px;color:#3ba55d;font-weight:bold;transform:scaleX(0.626);transform-origin:0 50%;">+1</div>
<div class="t" style="left:57.50px;top:665.40px;font-size:8.00px;color:#9a9ca6;">•</div>
<div class="t" style="left:63.00px;top:665.20px;font-size:8.00px;color:#9a9ca6;font-family:'DejaVu Sans','Liberation Sans',sans-serif;direction:rtl;transform:scaleX(.8);transform-origin:0 50%;">ولا يبكيني الدر</div>
<div class="a" style="left:61.30px;top:454.50px;width:160.00px;height:183.00px;background:#111114;border-radius:7.0px;background:radial-gradient(ellipse 120px 50px at 10% 0,#2c1a52 0,rgba(44,26,82,0) 100%),linear-gradient(180deg,#1c1838 0,#191634 20%,#111114 21%,#111114 100%);box-shadow:0 0 0 .5px #232328;"></div>
<div class="a" style="left:68.50px;top:634.00px;width:10.00px;height:10.00px;background:#111114;border-radius:1.5px;transform:rotate(45deg);"></div>
<svg class="a" style="left:204.200px;top:462.300px" width="8.500" height="8.500" viewBox="0 0 10 10"><path d="M1 1l8 8M9 1l-8 8" stroke="#f4f4f6" stroke-width="1.100" stroke-linecap="round"/></svg>
<div class="a" style="left:105.80px;top:476.00px;width:34.00px;height:13.80px;background:#4f5fe2;border-radius:7.0px;"><i class="a c" style="left:4.500px;top:3.400px;width:7px;height:7px;background:#aab4f4"></i><i class="a c" style="left:15px;top:3.400px;width:7px;height:7px;background:#e8ecfc"></i></div>
<div class="a" style="left:72.20px;top:608.80px;width:12.00px;height:20.20px;background:#5865f2;border-radius:4.0px;"></div>
<svg class="a" style="left:70px;top:450px;z-index:8" width="200" height="270" viewBox="70 450 200 270">
<defs>
<linearGradient id="lg1" x1="0" y1="0" x2="0" y2="1"><stop offset="0" stop-color="#ece234"/><stop offset=".22" stop-color="#f1e42a"/><stop offset=".45" stop-color="#f2d822"/><stop offset=".62" stop-color="#f2c824"/><stop offset=".8" stop-color="#f1b228"/><stop offset="1" stop-color="#ef9e2a"/></linearGradient>
<radialGradient id="lg2" cx=".42" cy=".36" r=".62"><stop offset="0" stop-color="#f6ea34" stop-opacity=".85"/><stop offset=".55" stop-color="#f4e030" stop-opacity=".25"/><stop offset="1" stop-color="#d89a18" stop-opacity=".5"/></radialGradient>
<linearGradient id="lg3" x1="0" y1="0" x2="1" y2="0"><stop offset="0" stop-color="#b8b418" stop-opacity=".6"/><stop offset=".16" stop-color="#e8dc20" stop-opacity="0"/><stop offset=".85" stop-color="#e8a818" stop-opacity="0"/><stop offset="1" stop-color="#d88a14" stop-opacity=".55"/></linearGradient>
<filter id="lb1" x="-20%" y="-20%" width="140%" height="140%"><feGaussianBlur stdDeviation="1.300"/></filter>
<filter id="lb2" x="-20%" y="-20%" width="140%" height="140%"><feGaussianBlur stdDeviation="1.100"/></filter>
<path id="lem" d="M161 458.500 C168 457 180 457 187 458.500 C191 459.500 193.500 461.500 195.500 464 C200 468 205 471 210 476 C217 484 222 490 227 496.500 C234 505 239 511 244 517.500 C251 527 255.500 535 258.500 543 C262 552 263.500 562 263.500 572 C263.500 590 261 608 255.500 626 C252 640 246 651 238.500 660 C230 669 221 677 212 684.500 C204 691 197 697 191.500 702.500 C186 708 181 714 172 716.500 C164 718.500 154 716 148 710 C144 706 143 705 141.500 703.500 C136 698 131 692 126.500 686.500 C119 678 112 671 106.500 664 C98 653 92 643 88.500 632 C83 616 78.500 604 77.500 592 C76 578 76.500 568 79.500 558 C82 547 87 534 93 522.500 C99 511 107 504 115.500 496.500 C124 488 133 481 143 474 C150 468 154 461 161 458.500 Z"/>
</defs>
<use href="#lem" fill="url(#lg1)"/>
<use href="#lem" fill="url(#lg2)"/>
<use href="#lem" fill="url(#lg3)"/>
<ellipse cx="132.500" cy="522" rx="6.500" ry="10.500" transform="rotate(28 132.500 522)" fill="#fefce8" opacity=".95" filter="url(#lb1)"/>
<ellipse cx="131" cy="583" rx="3" ry="6" transform="rotate(20 131 583)" fill="#f8f0a0" opacity=".5" filter="url(#lb1)"/>
<g filter="url(#lb2)">
<path d="M160 549 C166 541 182 538.500 196 541.500 C201 543 203 546 201.500 549 C198 555 184 558.500 172 557 C165 556 160 553 160 549 Z" fill="#d4b89a"/>
<path d="M165 549 C170 543.500 182 541.500 193 543.500 C197 545 198 547 196.500 549 C193 553.500 182 555.500 173 554.500 C168 553.500 165 551.500 165 549 Z" fill="#ece4e0"/>
<ellipse cx="186" cy="548" rx="6.500" ry="5.500" fill="#6a5e78"/><ellipse cx="187" cy="547.500" rx="3" ry="3.500" fill="#2a2630"/>
<path d="M160 548 C168 540 186 538 200 542" stroke="#8a6848" stroke-width="1.400" fill="none" opacity=".7"/>
<path d="M240 553 C243 547.500 251 546 257 549.500 C259.500 552 259 557 256 561 C252 564.500 245 564 241.500 560 C240 558 239.500 555.500 240 553 Z" fill="#e0d0c4"/>
<ellipse cx="252.500" cy="555" rx="4.500" ry="6" fill="#5a4e64"/><ellipse cx="253.500" cy="555" rx="2.200" ry="3.500" fill="#231f28"/>
<path d="M239.500 552 C244 546 252 545 258 549" stroke="#8a6848" stroke-width="1.300" fill="none" opacity=".7"/>
<path d="M188 592 C196 582 208 577.500 220 579.500 C224 580.500 226 582.500 229 582 C233 581 236 583 237 587 C238.500 594 236 603 230 607.500 C224 611.500 214 611 207 607.500 C199 604 192 598 188 592 Z" fill="#eaa6a4"/>
<path d="M192 592.500 C204 590 222 591 236 589" stroke="#d48488" stroke-width="1.600" fill="none"/>
<path d="M200 586 C208 581.500 218 581 226 583" stroke="#f4c4c0" stroke-width="2" fill="none" opacity=".8"/>
</g>
</svg>

<!-- ================= TASKBAR ================= -->
<div id="task" class="a"></div>
<div class="a" style="left:0.00px;top:688.00px;width:1280.00px;height:1.00px;background:#2a2a2d;"></div>
<svg class="a" style="left:13px;top:695.500px" width="16.500" height="16.500" viewBox="0 0 24 24"><path d="M15.500 1.500A11 11 0 1 0 22.500 16 9.500 9.500 0 0 1 15.500 1.500z" fill="#f2a324"/><path d="M15.500 1.500A11 11 0 0 0 8 21a10 10 0 0 0 14.500-5 9.500 9.500 0 0 1-7-14.500z" fill="#f7c04a" opacity=".55"/></svg>
<div class="t" style="left:33.80px;top:694.50px;font-size:8.80px;color:#f2f2f4;transform:scaleX(0.747);transform-origin:0 50%;">11°C</div>
<div class="t" style="left:33.80px;top:704.95px;font-size:8.90px;color:#d6d6d9;transform:scaleX(0.899);transform-origin:0 50%;">Temps dégagé</div>
<svg class="a" style="left:381px;top:696px" width="16" height="16" viewBox="0 0 16 16"><rect x="0" y="0" width="7.500" height="7.500" rx="1" fill="#4cc2f4"/><rect x="8.500" y="0" width="7.500" height="7.500" rx="1" fill="#4cc2f4"/><rect x="0" y="8.500" width="7.500" height="7.500" rx="1" fill="#2aa6e8"/><rect x="8.500" y="8.500" width="7.500" height="7.500" rx="1" fill="#2aa6e8"/></svg>
<div class="a" style="left:406.00px;top:693.50px;width:146.50px;height:22.50px;background:#2d2d30;border-radius:11.5px;box-shadow:inset 0 0 0 .6px #3a3a3e;"></div>
<svg class="a" style="left:414px;top:699px" width="11" height="11" viewBox="0 0 12 12"><circle cx="4.800" cy="4.800" r="3.700" fill="none" stroke="#e6e6e8" stroke-width="1.200"/><path d="M7.600 7.600l3.400 3.400" stroke="#e6e6e8" stroke-width="1.300" stroke-linecap="round"/></svg>
<div class="t" style="left:430.00px;top:699.60px;font-size:9.60px;color:#cfcfd3;transform:scaleX(0.920);transform-origin:0 50%;">Search</div>
<svg class="a" style="left:516px;top:695px" width="30" height="19" viewBox="0 0 30 19"><path d="M3 13l6-8 4 3-6 8z" fill="#5a5a62"/><path d="M14 15l12-6 2 4-12 5z" fill="#d8a028"/><circle cx="10" cy="4" r="1" fill="#e8e8ea"/><circle cx="15" cy="7" r=".8" fill="#e8c050"/><circle cx="19" cy="3" r=".8" fill="#e8e8ea"/><circle cx="5" cy="8" r=".7" fill="#c8c8cc"/></svg>
<div class="a" style="left:560.0px;top:695px;width:18px;height:18px"><i class="a" style="left:2px;top:2px;width:11px;height:11px;background:#5c5c60;border-radius:1.500px"></i><i class="a" style="left:5.500px;top:5px;width:11px;height:11px;background:#e4e4e6;border-radius:1.500px"></i></div>
<div class="a" style="left:589.0px;top:695px;width:18px;height:18px"><i class="a" style="left:0;top:2px;width:16px;height:14px;border-radius:5px;background:#5865f2"></i><i class="a c" style="left:4px;top:7px;width:3px;height:3.500px;background:#fff"></i><i class="a c" style="left:9px;top:7px;width:3px;height:3.500px;background:#fff"></i><i class="a c" style="left:10.500px;top:-1.500px;width:8.500px;height:8.500px;background:#e03a3e"></i><b class="t" style="left:13px;top:-.5px;font-size:6.500px;color:#fff">4</b></div><div class="a" style="left:596.00px;top:716.50px;width:4.00px;height:1.60px;background:#8a8a8e;border-radius:1.0px;"></div>
<div class="a" style="left:618.0px;top:695px;width:18px;height:18px"><i class="a" style="left:1px;top:4px;width:16px;height:11px;border-radius:2px;background:linear-gradient(135deg,#28a8ea 0 50%,#0a5cbd 50%)"></i><i class="a" style="left:5px;top:1px;width:11px;height:8px;border-radius:1.500px;background:#7fd2f8;transform:rotate(-18deg)"></i><i class="a" style="left:1px;top:9px;width:9px;height:6px;border-radius:1px;background:#0f4ea8"></i></div><div class="a" style="left:625.00px;top:716.50px;width:4.00px;height:1.60px;background:#8a8a8e;border-radius:1.0px;"></div>
<div class="a" style="left:647.0px;top:695px;width:18px;height:18px"><i class="a" style="left:1px;top:1px;width:16px;height:16px;border-radius:5px;background:conic-gradient(from 200deg,#3a7cf0,#7c5cf0,#e85ca0,#f0a040,#48c0e8,#3a7cf0)"></i><i class="a" style="left:6px;top:6px;width:6px;height:6px;border-radius:2px;background:#1b1b1c"></i></div><div class="a" style="left:654.00px;top:716.50px;width:4.00px;height:1.60px;background:#8a8a8e;border-radius:1.0px;"></div>
<div class="a" style="left:676.0px;top:695px;width:18px;height:18px"><i class="a c" style="left:1px;top:1px;width:16px;height:16px;background:conic-gradient(from 30deg,#fbc116 0 33%,#34a853 33% 66%,#ea4335 66%)"></i><i class="a c" style="left:5px;top:5px;width:8px;height:8px;background:#4285f4;border:1.300px solid #fff"></i></div><div class="a" style="left:683.00px;top:716.50px;width:4.00px;height:1.60px;background:#8a8a8e;border-radius:1.0px;"></div>
<div class="a" style="left:705.0px;top:695px;width:18px;height:18px"><i class="a" style="left:1px;top:3px;width:8px;height:4px;border-radius:1.500px 1.500px 0 0;background:#e8a820"></i><i class="a" style="left:1px;top:5px;width:16px;height:11px;border-radius:1.500px;background:linear-gradient(180deg,#ffd354 0 55%,#f0b428 55%)"></i><i class="a" style="left:5px;top:12px;width:8px;height:4px;background:#3a8ae0;border-radius:1px"></i></div><div class="a" style="left:712.00px;top:716.50px;width:4.00px;height:1.60px;background:#8a8a8e;border-radius:1.0px;"></div>
<div class="a" style="left:734.0px;top:695px;width:18px;height:18px"><i class="a" style="left:1.500px;top:1px;width:15px;height:16px;border-radius:3px 3px 8px 8px;background:linear-gradient(180deg,#ff5a1f,#e0301a)"></i><i class="a" style="left:5px;top:4.500px;width:8px;height:8px;border-radius:2px 2px 4px 4px;background:#fff"></i><i class="a" style="left:7px;top:7px;width:4px;height:4px;border-radius:1px 1px 2px 2px;background:#e8401c"></i></div><div class="a" style="left:741.00px;top:716.50px;width:4.00px;height:1.60px;background:#8a8a8e;border-radius:1.0px;"></div>
<div class="a" style="left:763.0px;top:695px;width:18px;height:18px"><i class="a c" style="left:1px;top:1px;width:16px;height:16px;background:linear-gradient(160deg,#12244a,#1c6aa8)"></i><i class="a c" style="left:9px;top:3.500px;width:6px;height:6px;border:1.400px solid #fff"></i><i class="a c" style="left:3.500px;top:9.500px;width:5px;height:5px;background:#fff"></i><i class="a" style="left:6px;top:8.500px;width:6px;height:2.400px;background:#fff;transform:rotate(-28deg)"></i></div><div class="a" style="left:770.00px;top:716.50px;width:4.00px;height:1.60px;background:#8a8a8e;border-radius:1.0px;"></div>
<div class="a" style="left:793.0px;top:695px;width:18px;height:18px"><i class="a c" style="left:1px;top:1px;width:16px;height:16px;background:#2a2a2c;border:1.500px solid #d8d8da"></i><i class="a c" style="left:5px;top:4px;width:5px;height:5px;border:1.200px solid #d8d8da"></i><i class="a c" style="left:8.500px;top:8px;width:5px;height:5px;border:1.200px solid #d8d8da"></i><i class="a c" style="left:12px;top:-1px;width:7px;height:7px;background:#e0242a"></i></div><div class="a" style="left:800.00px;top:716.50px;width:4.00px;height:1.60px;background:#8a8a8e;border-radius:1.0px;"></div>
<div class="a" style="left:823.0px;top:695px;width:18px;height:18px"><i class="a" style="left:1px;top:1px;width:16px;height:16px;border-radius:4px;background:linear-gradient(135deg,#3ab4f8,#1a6ee0)"></i><svg class="a" style="left:3px;top:4px" width="12" height="10" viewBox="0 0 12 10"><path d="M1 9l3-8 3 8M5 9l2.500-6L10.500 9" stroke="#fff" stroke-width="1.600" fill="none" stroke-linejoin="round"/></svg></div><div class="a" style="left:830.00px;top:716.50px;width:4.00px;height:1.60px;background:#8a8a8e;border-radius:1.0px;"></div>
<div class="a" style="left:852.0px;top:695px;width:18px;height:18px"><i class="a" style="left:1px;top:1px;width:16px;height:16px;border-radius:2px;background:#f07c1e"></i><svg class="a" style="left:3px;top:2.500px" width="12" height="13" viewBox="0 0 12 13"><path d="M6 1L1.500 12M6 1l4.500 11M3.500 8h5" stroke="#fff" stroke-width="1.500" fill="none"/><path d="M6 1l-2 11" stroke="#ffd0a0" stroke-width="1"/></svg></div><div class="a" style="left:859.00px;top:716.50px;width:4.00px;height:1.60px;background:#8a8a8e;border-radius:1.0px;"></div>
<div class="a" style="left:881.0px;top:695px;width:18px;height:18px"><i class="a c" style="left:1px;top:1px;width:16px;height:16px;background:conic-gradient(from 30deg,#fbc116 0 33%,#34a853 33% 66%,#ea4335 66%)"></i><i class="a c" style="left:5px;top:5px;width:8px;height:8px;background:#4285f4;border:1.300px solid #fff"></i><i class="a c" style="left:10px;top:-1px;width:9px;height:9px;background:radial-gradient(circle,#d8b088 0 40%,#5a3a28 70%)"></i></div><div class="a" style="left:884.50px;top:716.50px;width:11.00px;height:1.60px;background:#c48df0;border-radius:1.0px;"></div>
<svg class="a" style="left:1103px;top:701px" width="10" height="7" viewBox="0 0 10 7"><path d="M1 6l4-4.500L9 6" stroke="#f0f0f2" stroke-width="1.300" fill="none" stroke-linecap="round" stroke-linejoin="round"/></svg>
<svg class="a" style="left:1124px;top:698px" width="11" height="12" viewBox="0 0 11 12"><rect x="4" y="1" width="3.400" height="6" rx="1.700" fill="#d8d8dc"/><path d="M2.500 6a3.200 3.200 0 0 0 6.400 0M5.700 9.300V11" stroke="#d8d8dc" stroke-width="1" fill="none"/><path d="M1.500 2l8 8.500" stroke="#c85a7a" stroke-width="1.400" stroke-linecap="round"/></svg>
<svg class="a" style="left:1145.500px;top:697.500px" width="10" height="12.500" viewBox="0 0 10 12.500"><rect x="3" y=".5" width="4" height="7.500" rx="2" fill="#c4688c"/><path d="M1.200 6.300a3.800 3.800 0 0 0 7.600 0M5 10.200v2" stroke="#c4688c" stroke-width="1.100" fill="none" stroke-linecap="round"/></svg>
<div class="t" style="left:1174.50px;top:700.00px;font-size:10.00px;color:#e8e8ea;font-family:'DejaVu Sans','Liberation Sans',sans-serif;">ε</div>
<svg class="a" style="left:1195px;top:698px" width="13" height="12" viewBox="0 0 13 12"><rect x=".8" y="1" width="9" height="7.500" rx="1" fill="none" stroke="#f0f0f2" stroke-width="1.100"/><path d="M3 11h5M5.500 8.500V11" stroke="#f0f0f2" stroke-width="1.100"/><rect x="8" y="4" width="4.500" height="6.500" rx=".8" fill="#1b1b1c" stroke="#f0f0f2" stroke-width="1"/></svg>
<svg class="a" style="left:1211px;top:698.500px" width="12.500" height="11" viewBox="0 0 12.500 11"><path d="M.8 3.800h2.200L6 1v9L3 7.200H.8z" fill="none" stroke="#f0f0f2" stroke-width="1" stroke-linejoin="round"/><path d="M7.800 3.500a2.800 2.800 0 0 1 0 4M9.500 1.800a5 5 0 0 1 0 7.400" stroke="#f0f0f2" stroke-width="1" fill="none" stroke-linecap="round"/></svg>
<div class="t" style="left:1233.80px;top:694.30px;font-size:9.00px;color:#f4f4f6;transform:scaleX(0.873);transform-origin:0 50%;">12:13 AM</div>
<div class="t" style="left:1235.00px;top:705.00px;font-size:9.00px;color:#f4f4f6;transform:scaleX(0.913);transform-origin:0 50%;">1/1/2026</div>

</body>
</html>
